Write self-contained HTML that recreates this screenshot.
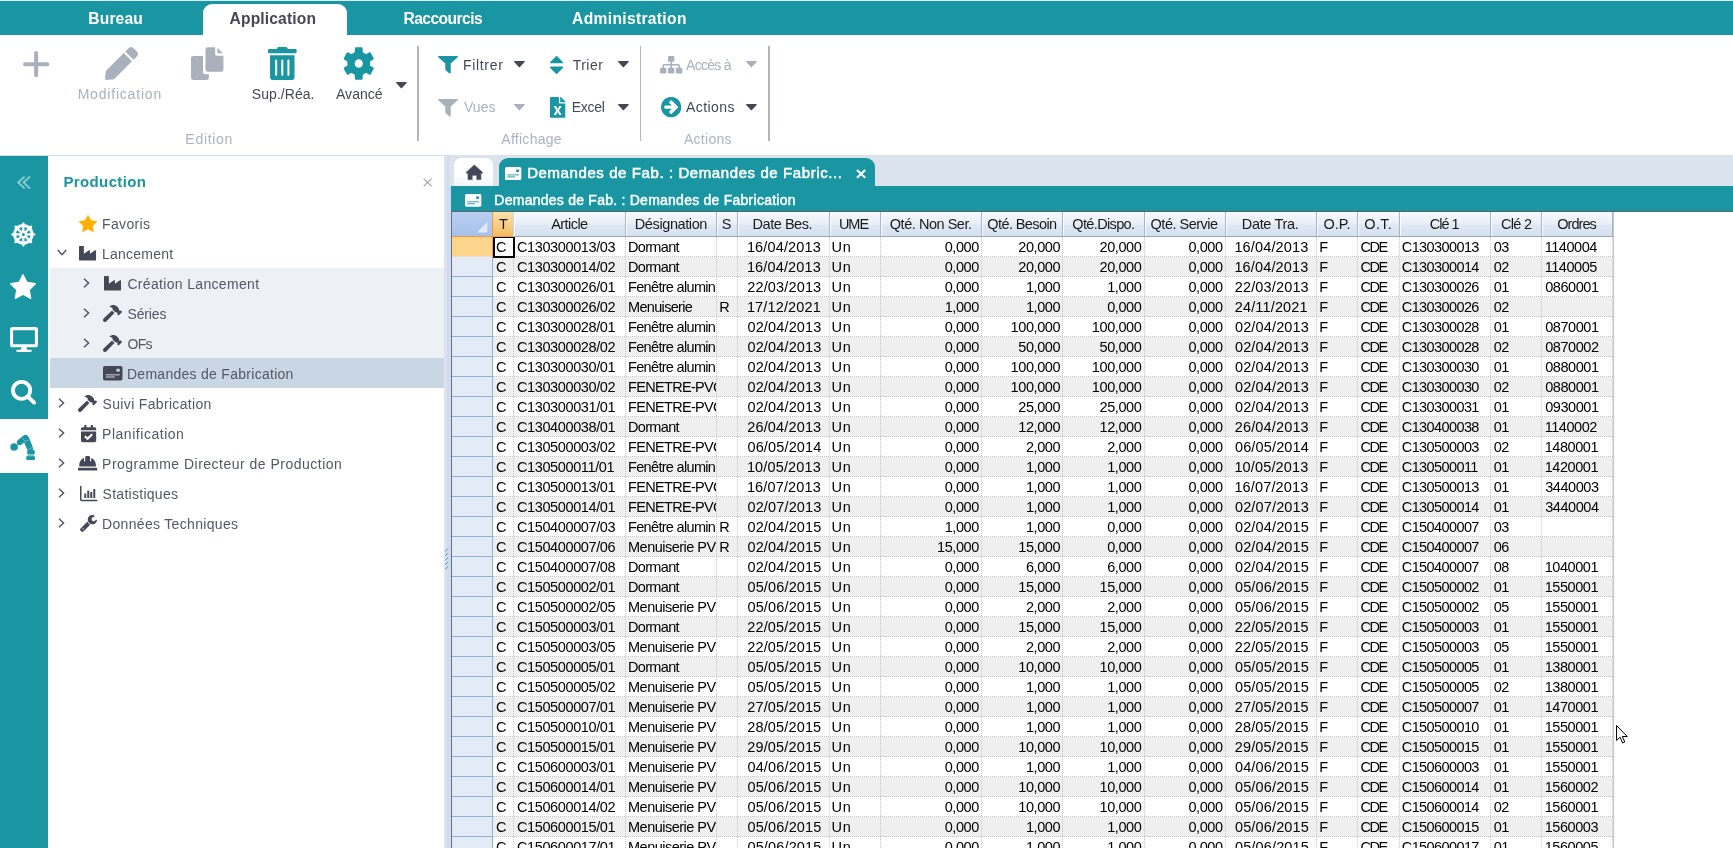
<!DOCTYPE html><html lang="fr"><head><meta charset="utf-8"><title>Demandes de Fabrication</title><style>
*{box-sizing:border-box}
html,body{margin:0;padding:0}
body{width:1733px;height:848px;overflow:hidden;background:#fff;position:relative;font-family:"Liberation Sans",sans-serif;}
#app{position:absolute;left:0;top:0;width:1733px;height:848px;overflow:hidden;will-change:transform;background:#fff}
.a,.t,.ic{position:absolute}
.t{white-space:nowrap;margin:0;padding:0;font-weight:normal}
.ic{display:block;overflow:visible}
#grid{position:absolute;left:451px;top:211px;width:1282px;height:637px;background:#fff;overflow:hidden;font-size:14.5px;color:#000}
.hc{position:absolute;top:1px;height:25px;border-right:1px solid #9fb6d6;border-bottom:1px solid #9ba5b4;background:linear-gradient(#f7f9fc 0%,#eaf0f8 45%,#dfe8f4 55%,#d5e1f0 100%);box-shadow:inset 1px 0 0 #fff;}
.row{position:absolute;left:42px;width:1120px;height:20px;border-bottom:1px dotted #c4c4c4}
.row.alt{background:#efefef}
.c{position:absolute;top:0;height:19px;line-height:21px;white-space:nowrap;overflow:hidden}
.vs{position:absolute;top:26px;width:0;height:611px;border-left:1px dotted #c6c6c6}
.rh{position:absolute;left:1px;width:41px;height:20px;background:#e3ebf7;border-bottom:1px solid #8fb0dd;border-right:1px solid #8fb0dd}
</style></head><body><div id="app">
<div class="a" id="topbar" style="left:0;top:0;width:1733px;height:35px;background:#1996a2;border-top:1px solid #d9eef0"></div>
<div class="a" id="tab-active" style="left:203px;top:4px;width:144px;height:32px;background:#fff;border-radius:9px 9px 0 0"></div>
<span class="t" style="left:88.36px;top:9.19px;font-size:15.6px;line-height:20px;color:#fff;letter-spacing:0.123px;font-weight:bold;">Bureau</span>
<span class="t" style="left:229.62px;top:9.19px;font-size:15.6px;line-height:20px;color:#48465a;letter-spacing:0.142px;font-weight:bold;">Application</span>
<span class="t" style="left:403.46px;top:9.19px;font-size:15.6px;line-height:20px;color:#fff;letter-spacing:-0.549px;font-weight:bold;">Raccourcis</span>
<span class="t" style="left:572.12px;top:9.19px;font-size:15.6px;line-height:20px;color:#fff;letter-spacing:0.329px;font-weight:bold;">Administration</span>
<div class="a" id="ribbon" style="left:0;top:35px;width:1733px;height:120px;background:#fff"></div>
<div class="a" style="left:0;top:155px;width:1733px;height:1px;background:#cfe0ea"></div>
<svg class="ic" style="left:23.40px;top:50.80px;width:26.30px;height:26.30px" viewBox="0 0 26 26" preserveAspectRatio="none"><path d="M13 2v22M2 13h22" stroke="#a9b1bd" stroke-width="4" stroke-linecap="round" fill="none"/></svg>
<svg class="ic" style="left:104.50px;top:47.00px;width:33.00px;height:33.00px" viewBox="0 0 512 512" preserveAspectRatio="none"><path fill="#a9b1bd" d="M290.74 93.24l128.02 128.02-277.99 277.99-114.14 12.6C11.35 513.54-1.56 500.62.14 485.34l12.7-114.22 277.9-277.88zm207.2-19.06l-60.11-60.11c-18.75-18.75-49.16-18.75-67.91 0l-56.55 56.55 128.02 128.02 56.55-56.55c18.75-18.76 18.75-49.16 0-67.91z"/></svg>
<span class="t" style="left:77.65px;top:84.85px;font-size:14px;line-height:18px;color:#a9b1bd;letter-spacing:0.804px;">Modification</span>
<svg class="ic" style="left:188.00px;top:44.00px;width:38.00px;height:38.00px" viewBox="188 44 38 38" preserveAspectRatio="none"><g fill="#a9b1bd"><path d="M193.200 55.900H203V72a2.200 2.200 0 0 0 2.200 2.200H208.900V77.700a2.200 2.200 0 0 1-2.200 2.200H193.200a2.200 2.200 0 0 1-2.200-2.200V58.100a2.200 2.200 0 0 1 2.200-2.200z"/><path d="M207.700 47.200H215.100V54a1.800 1.800 0 0 0 1.800 1.800H223.400V69.600a2.200 2.200 0 0 1-2.200 2.200H207.700a2.200 2.200 0 0 1-2.200-2.200V49.400a2.200 2.200 0 0 1 2.200-2.200z"/><path d="M217.400 48L222.900 53.300H217.400z"/></g></svg>
<svg class="ic" style="left:268.00px;top:46.70px;width:28.60px;height:33.00px" viewBox="0 0 448 512" preserveAspectRatio="none"><path fill="#1996a2" d="M32 464a48 48 0 0 0 48 48h288a48 48 0 0 0 48-48V128H32zm272-256a16 16 0 0 1 32 0v224a16 16 0 0 1-32 0zm-96 0a16 16 0 0 1 32 0v224a16 16 0 0 1-32 0zm-96 0a16 16 0 0 1 32 0v224a16 16 0 0 1-32 0zM432 32H312l-9.400-18.700A24 24 0 0 0 281.100 0H166.800a23.720 23.720 0 0 0-21.400 13.300L136 32H16A16 16 0 0 0 0 48v32a16 16 0 0 0 16 16h416a16 16 0 0 0 16-16V48a16 16 0 0 0-16-16z"/></svg>
<span class="t" style="left:251.87px;top:84.85px;font-size:14px;line-height:18px;color:#464756;letter-spacing:0.042px;">Sup./Réa.</span>
<svg class="ic" style="left:343.30px;top:46.70px;width:31.50px;height:33.00px" viewBox="0 0 100 100" preserveAspectRatio="none"><path fill="#1996a2" fill-rule="evenodd" stroke="#1996a2" stroke-width="6" stroke-linejoin="round" d="M40.0 17.5 L40.7 3.9 L59.3 3.9 L60.0 17.5 L73.1 25.1 L85.2 18.9 L94.6 35.1 L83.2 42.5 L83.2 57.5 L94.6 64.9 L85.2 81.1 L73.1 74.9 L60.0 82.5 L59.3 96.1 L40.7 96.1 L40.0 82.5 L26.9 74.9 L14.8 81.1 L5.4 64.9 L16.8 57.5 L16.8 42.5 L5.4 35.1 L14.8 18.9 L26.9 25.1Z M34 50 a16 16 0 1 0 32 0 a16 16 0 1 0 -32 0Z"/></svg>
<span class="t" style="left:335.98px;top:84.85px;font-size:14px;line-height:18px;color:#464756;letter-spacing:0.040px;">Avancé</span>
<svg class="ic" style="left:395.50px;top:82.40px;width:10.80px;height:6.40px" viewBox="0 0 10 6" preserveAspectRatio="none"><path fill="#464756" d="M0.6 0h8.8a0.6 0.6 0 0 1 .45 1L5.500 5.700a.7.7 0 0 1-1 0L.15 1A.6.6 0 0 1 .6 0z"/></svg>
<div class="a" style="left:417.25px;top:46px;width:1.5px;height:95px;background:#b3b5bc"></div>
<div class="a" style="left:639.65px;top:46px;width:1.5px;height:95px;background:#b3b5bc"></div>
<div class="a" style="left:768.25px;top:46px;width:1.5px;height:95px;background:#b3b5bc"></div>
<span class="t" style="left:185.35px;top:129.55px;font-size:14px;line-height:18px;color:#aab2c5;letter-spacing:0.708px;">Edition</span>
<span class="t" style="left:501.28px;top:129.55px;font-size:14px;line-height:18px;color:#aab2c5;letter-spacing:0.278px;">Affichage</span>
<span class="t" style="left:683.98px;top:129.55px;font-size:14px;line-height:18px;color:#aab2c5;letter-spacing:0.269px;">Actions</span>
<svg class="ic" style="left:438.30px;top:56.10px;width:20.00px;height:17.50px" viewBox="-1.0 -1280.0 1410.0 1408.0" preserveAspectRatio="none"><path transform="scale(1,-1)" fill="#1996a2" d="M1403 1241q17 -41 -14 -70l-493 -493v-742q0 -42 -39 -59q-13 -5 -25 -5q-27 0 -45 19l-256 256q-19 19 -19 45v486l-493 493q-31 29 -14 70q17 39 59 39h1280q42 0 59 -39z"/></svg>
<span class="t" style="left:462.95px;top:56.05px;font-size:14px;line-height:18px;color:#464756;letter-spacing:0.685px;">Filtrer</span>
<svg class="ic" style="left:514.30px;top:61.20px;width:10.80px;height:6.40px" viewBox="0 0 10 6" preserveAspectRatio="none"><path fill="#464756" d="M0.6 0h8.8a0.6 0.6 0 0 1 .45 1L5.500 5.700a.7.7 0 0 1-1 0L.15 1A.6.6 0 0 1 .6 0z"/></svg>
<svg class="ic" style="left:550.40px;top:55.70px;width:13.10px;height:17.90px" viewBox="0.0 -1344.0 1024.0 1408.0" preserveAspectRatio="none"><path transform="scale(1,-1)" fill="#1996a2" d="M1024 448q0 -26 -19 -45l-448 -448q-19 -19 -45 -19t-45 19l-448 448q-19 19 -19 45t19 45t45 19h896q26 0 45 -19t19 -45zM1024 832q0 -26 -19 -45t-45 -19h-896q-26 0 -45 19t-19 45t19 45l448 448q19 19 45 19t45 -19l448 -448q19 -19 19 -45z"/></svg>
<span class="t" style="left:572.69px;top:56.05px;font-size:14px;line-height:18px;color:#464756;letter-spacing:0.472px;">Trier</span>
<svg class="ic" style="left:618.00px;top:61.20px;width:10.80px;height:6.40px" viewBox="0 0 10 6" preserveAspectRatio="none"><path fill="#464756" d="M0.6 0h8.8a0.6 0.6 0 0 1 .45 1L5.500 5.700a.7.7 0 0 1-1 0L.15 1A.6.6 0 0 1 .6 0z"/></svg>
<svg class="ic" style="left:659.70px;top:56.10px;width:22.30px;height:17.50px" viewBox="0.0 -1408.0 1792.0 1536.0" preserveAspectRatio="none"><path transform="scale(1,-1)" fill="#a9b1bd" d="M1792 288v-320q0 -40 -28 -68t-68 -28h-320q-40 0 -68 28t-28 68v320q0 40 28 68t68 28h96v192h-512v-192h96q40 0 68 -28t28 -68v-320q0 -40 -28 -68t-68 -28h-320q-40 0 -68 28t-28 68v320q0 40 28 68t68 28h96v192h-512v-192h96q40 0 68 -28t28 -68v-320
q0 -40 -28 -68t-68 -28h-320q-40 0 -68 28t-28 68v320q0 40 28 68t68 28h96v192q0 52 38 90t90 38h512v192h-96q-40 0 -68 28t-28 68v320q0 40 28 68t68 28h320q40 0 68 -28t28 -68v-320q0 -40 -28 -68t-68 -28h-96v-192h512q52 0 90 -38t38 -90v-192h96q40 0 68 -28t28 -68
z"/></svg>
<span class="t" style="left:686.08px;top:56.05px;font-size:14px;line-height:18px;color:#a9b1bd;letter-spacing:-0.731px;">Accès à</span>
<svg class="ic" style="left:746.40px;top:61.20px;width:10.80px;height:6.40px" viewBox="0 0 10 6" preserveAspectRatio="none"><path fill="#a9b1bd" d="M0.6 0h8.8a0.6 0.6 0 0 1 .45 1L5.500 5.700a.7.7 0 0 1-1 0L.15 1A.6.6 0 0 1 .6 0z"/></svg>
<svg class="ic" style="left:438.30px;top:98.50px;width:20.00px;height:17.50px" viewBox="-1.0 -1280.0 1410.0 1408.0" preserveAspectRatio="none"><path transform="scale(1,-1)" fill="#a9b1bd" d="M1403 1241q17 -41 -14 -70l-493 -493v-742q0 -42 -39 -59q-13 -5 -25 -5q-27 0 -45 19l-256 256q-19 19 -19 45v486l-493 493q-31 29 -14 70q17 39 59 39h1280q42 0 59 -39z"/></svg>
<span class="t" style="left:463.94px;top:97.65px;font-size:14px;line-height:18px;color:#a9b1bd;letter-spacing:0.057px;">Vues</span>
<svg class="ic" style="left:514.30px;top:103.60px;width:10.80px;height:6.40px" viewBox="0 0 10 6" preserveAspectRatio="none"><path fill="#a9b1bd" d="M0.6 0h8.8a0.6 0.6 0 0 1 .45 1L5.500 5.700a.7.7 0 0 1-1 0L.15 1A.6.6 0 0 1 .6 0z"/></svg>
<svg class="ic" style="left:549.50px;top:96.90px;width:15.30px;height:20.70px" viewBox="0 0 384 512" preserveAspectRatio="none"><path fill="#1996a2" d="M224 136V0H24C10.7 0 0 10.7 0 24v464c0 13.300 10.700 24 24 24h336c13.300 0 24-10.700 24-24V160H248c-13.200 0-24-10.800-24-24zm60.100 106.500L224 336l60.100 93.500c5.100 8-.6 18.500-10.100 18.500h-34.900c-4.400 0-8.500-2.400-10.600-6.300C208.900 405.500 192 373 192 373c-6.400 14.800-10 20-36.600 68.800-2.100 3.900-6.100 6.300-10.500 6.300H110c-9.500 0-15.200-10.500-10.100-18.500l60.300-93.500-60.300-93.500c-5.200-8 .6-18.500 10.100-18.500h34.800c4.400 0 8.500 2.400 10.600 6.300 26.100 48.800 20 33.600 36.600 68.500 0 0 6.100-11.700 36.600-68.500 2.100-3.900 6.200-6.300 10.600-6.300H274c9.500-.1 15.200 10.400 10.100 18.400zM384 121.900v6.100H256V0h6.100c6.400 0 12.500 2.500 17 7l97.900 98c4.500 4.500 7 10.600 7 16.900z"/></svg>
<span class="t" style="left:571.85px;top:97.65px;font-size:14px;line-height:18px;color:#464756;letter-spacing:-0.313px;">Excel</span>
<svg class="ic" style="left:618.00px;top:103.60px;width:10.80px;height:6.40px" viewBox="0 0 10 6" preserveAspectRatio="none"><path fill="#464756" d="M0.6 0h8.8a0.6 0.6 0 0 1 .45 1L5.500 5.700a.7.7 0 0 1-1 0L.15 1A.6.6 0 0 1 .6 0z"/></svg>
<svg class="ic" style="left:660.80px;top:96.90px;width:20.30px;height:20.30px" viewBox="0.0 -1408.0 1536.0 1536.0" preserveAspectRatio="none"><path transform="scale(1,-1)" fill="#1996a2" d="M1285 640q0 27 -18 45l-91 91l-362 362q-18 18 -45 18t-45 -18l-91 -91q-18 -18 -18 -45t18 -45l189 -189h-502q-26 0 -45 -19t-19 -45v-128q0 -26 19 -45t45 -19h502l-189 -189q-19 -19 -19 -45t19 -45l91 -91q18 -18 45 -18t45 18l362 362l91 91q18 18 18 45zM1536 640
q0 -209 -103 -385.5t-279.5 -279.5t-385.5 -103t-385.5 103t-279.5 279.5t-103 385.5t103 385.5t279.5 279.5t385.5 103t385.5 -103t279.5 -279.5t103 -385.5z"/></svg>
<span class="t" style="left:686.08px;top:97.65px;font-size:14px;line-height:18px;color:#464756;letter-spacing:0.419px;">Actions</span>
<svg class="ic" style="left:746.40px;top:103.60px;width:10.80px;height:6.40px" viewBox="0 0 10 6" preserveAspectRatio="none"><path fill="#464756" d="M0.6 0h8.8a0.6 0.6 0 0 1 .45 1L5.500 5.700a.7.7 0 0 1-1 0L.15 1A.6.6 0 0 1 .6 0z"/></svg>
<div class="a" id="sidebar" style="left:0;top:156px;width:48px;height:692px;background:#1996a2"></div>
<div class="a" style="left:0;top:419px;width:48px;height:54px;background:#fff"></div>
<svg class="ic" style="left:17.00px;top:176.00px;width:13.50px;height:13.00px" viewBox="45.0 -1075.0 966.0 998.0" preserveAspectRatio="none"><path transform="scale(1,-1)" fill="#8ccdd3" d="M627 160q0 -13 -10 -23l-50 -50q-10 -10 -23 -10t-23 10l-466 466q-10 10 -10 23t10 23l466 466q10 10 23 10t23 -10l50 -50q10 -10 10 -23t-10 -23l-393 -393l393 -393q10 -10 10 -23zM1011 160q0 -13 -10 -23l-50 -50q-10 -10 -23 -10t-23 10l-466 466q-10 10 -10 23
t10 23l466 466q10 10 23 10t23 -10l50 -50q10 -10 10 -23t-10 -23l-393 -393l393 -393q10 -10 10 -23z"/></svg>
<svg class="ic" style="left:0.00px;top:210.00px;width:48.00px;height:52.00px" viewBox="0 210 48 52" preserveAspectRatio="none"><circle cx="23.3" cy="234.4" r="8.800" fill="none" stroke="#fff" stroke-width="3"/><circle cx="23.3" cy="234.4" r="3.700" fill="#fff"/><g transform="rotate(0 23.3 234.4)"><rect x="22.150000000000002" y="226.4" width="2.300" height="8" fill="#fff"/><path d="M21.8 224.4 L23.3 222.4 L24.8 224.4z" fill="#fff" stroke="#fff" stroke-width="0.700" stroke-linejoin="round"/></g><g transform="rotate(45 23.3 234.4)"><rect x="22.150000000000002" y="226.4" width="2.300" height="8" fill="#fff"/><path d="M21.8 224.4 L23.3 222.4 L24.8 224.4z" fill="#fff" stroke="#fff" stroke-width="0.700" stroke-linejoin="round"/></g><g transform="rotate(90 23.3 234.4)"><rect x="22.150000000000002" y="226.4" width="2.300" height="8" fill="#fff"/><path d="M21.8 224.4 L23.3 222.4 L24.8 224.4z" fill="#fff" stroke="#fff" stroke-width="0.700" stroke-linejoin="round"/></g><g transform="rotate(135 23.3 234.4)"><rect x="22.150000000000002" y="226.4" width="2.300" height="8" fill="#fff"/><path d="M21.8 224.4 L23.3 222.4 L24.8 224.4z" fill="#fff" stroke="#fff" stroke-width="0.700" stroke-linejoin="round"/></g><g transform="rotate(180 23.3 234.4)"><rect x="22.150000000000002" y="226.4" width="2.300" height="8" fill="#fff"/><path d="M21.8 224.4 L23.3 222.4 L24.8 224.4z" fill="#fff" stroke="#fff" stroke-width="0.700" stroke-linejoin="round"/></g><g transform="rotate(225 23.3 234.4)"><rect x="22.150000000000002" y="226.4" width="2.300" height="8" fill="#fff"/><path d="M21.8 224.4 L23.3 222.4 L24.8 224.4z" fill="#fff" stroke="#fff" stroke-width="0.700" stroke-linejoin="round"/></g><g transform="rotate(270 23.3 234.4)"><rect x="22.150000000000002" y="226.4" width="2.300" height="8" fill="#fff"/><path d="M21.8 224.4 L23.3 222.4 L24.8 224.4z" fill="#fff" stroke="#fff" stroke-width="0.700" stroke-linejoin="round"/></g><g transform="rotate(315 23.3 234.4)"><rect x="22.150000000000002" y="226.4" width="2.300" height="8" fill="#fff"/><path d="M21.8 224.4 L23.3 222.4 L24.8 224.4z" fill="#fff" stroke="#fff" stroke-width="0.700" stroke-linejoin="round"/></g><circle cx="23.3" cy="234.4" r="1.500" fill="#1996a2"/></svg>
<svg class="ic" style="left:10.20px;top:274.00px;width:26.00px;height:25.00px" viewBox="0.0 -1504.0 1664.0 1587.0" preserveAspectRatio="none"><path transform="scale(1,-1)" fill="#fff" d="M1664 889q0 -22 -26 -48l-363 -354l86 -500q1 -7 1 -20q0 -21 -10.5 -35.5t-30.5 -14.5q-19 0 -40 12l-449 236l-449 -236q-22 -12 -40 -12q-21 0 -31.5 14.5t-10.5 35.5q0 6 2 20l86 500l-364 354q-25 27 -25 48q0 37 56 46l502 73l225 455q19 41 49 41t49 -41l225 -455
l502 -73q56 -9 56 -46z"/></svg>
<svg class="ic" style="left:9.60px;top:327.00px;width:28.00px;height:25.00px" viewBox="0 0 576 512" preserveAspectRatio="none"><path fill="#fff" d="M528 0H48C21.500 0 0 21.500 0 48v320c0 26.500 21.500 48 48 48h192l-16 48h-72c-13.300 0-24 10.700-24 24s10.700 24 24 24h272c13.300 0 24-10.700 24-24s-10.700-24-24-24h-72l-16-48h192c26.500 0 48-21.500 48-48V48c0-26.500-21.500-48-48-48zm-16 352H64V64h448v288z"/></svg>
<svg class="ic" style="left:11.00px;top:380.00px;width:25.00px;height:24.50px" viewBox="0.0 -1408.0 1664.0 1664.0" preserveAspectRatio="none"><path transform="scale(1,-1)" fill="#fff" d="M1152 704q0 185 -131.5 316.5t-316.5 131.5t-316.5 -131.5t-131.5 -316.5t131.5 -316.5t316.5 -131.5t316.5 131.5t131.5 316.5zM1664 -128q0 -52 -38 -90t-90 -38q-54 0 -90 38l-343 342q-179 -124 -399 -124q-143 0 -273.5 55.5t-225 150t-150 225t-55.5 273.5
t55.5 273.5t150 225t225 150t273.5 55.5t273.5 -55.5t225 -150t150 -225t55.5 -273.5q0 -220 -124 -399l343 -343q37 -37 37 -90z"/></svg>
<svg class="ic" style="left:0.00px;top:420.00px;width:48.00px;height:52.00px" viewBox="0 420 48 52" preserveAspectRatio="none"><circle cx="14.100" cy="447" r="3.800" fill="#1996a2"/><path d="M17 445l2.500-2" stroke="#7cc6cd" stroke-width="2.500" fill="none"/><path d="M19.800 442.300L25.400 437.900" stroke="#1996a2" stroke-width="5.800" stroke-linecap="round" fill="none"/><path d="M26.300 439.200L29.800 448.200" stroke="#1996a2" stroke-width="6.200" stroke-linecap="round" fill="none"/><ellipse cx="31" cy="452.200" rx="3.900" ry="3" fill="#1996a2"/><rect x="27.500" y="454" width="6.500" height="3" fill="#7cc6cd"/><rect x="26.200" y="456.200" width="8.800" height="3.700" rx="0.800" fill="#1996a2"/><path d="M22 438l3.500 3.500M25 441.500l4-1.500M27.500 449.500l5-2" stroke="#7cc6cd" stroke-width="0.700" fill="none"/></svg>
<div class="a" id="nav" style="left:48px;top:156px;width:396px;height:692px;background:#fff"></div>
<div class="a" style="left:50px;top:268px;width:394px;height:90px;background:#edf0f5"></div>
<div class="a" style="left:50px;top:358px;width:394px;height:30px;background:#c9d6e3"></div>
<span class="t" style="left:63.50px;top:172.30px;font-size:15px;line-height:20px;color:#1996a2;letter-spacing:0.363px;font-weight:bold;">Production</span>
<svg class="ic" style="left:422.60px;top:178.10px;width:9.20px;height:9.00px" viewBox="0 0 10 10" preserveAspectRatio="none"><path d="M0.700 0.700l8.600 8.600M9.300 0.700l-8.600 8.600" stroke="#a3a9b5" stroke-width="1.500" fill="none"/></svg>
<svg class="ic" style="left:79.00px;top:215.00px;width:18.00px;height:17.00px" viewBox="0.0 -1504.0 1664.0 1587.0" preserveAspectRatio="none"><path transform="scale(1,-1)" fill="#ffb000" d="M1664 889q0 -22 -26 -48l-363 -354l86 -500q1 -7 1 -20q0 -21 -10.5 -35.5t-30.5 -14.5q-19 0 -40 12l-449 236l-449 -236q-22 -12 -40 -12q-21 0 -31.5 14.5t-10.5 35.5q0 6 2 20l86 500l-364 354q-25 27 -25 48q0 37 56 46l502 73l225 455q19 41 49 41t49 -41l225 -455
l502 -73q56 -9 56 -46z"/></svg>
<span class="t" style="left:102.05px;top:215.15px;font-size:14px;line-height:18px;color:#545765;letter-spacing:0.342px;">Favoris</span>
<svg class="ic" style="left:57.00px;top:248.60px;width:10.00px;height:7.00px" viewBox="0 0 10 7" preserveAspectRatio="none"><path d="M0.800 1L5 5.600 9.200 1" stroke="#4f4f68" stroke-width="1.400" fill="none"/></svg>
<svg class="ic" style="left:79.00px;top:246.00px;width:17.00px;height:14.50px" viewBox="0.0 -1536.0 1792.0 1792.0" preserveAspectRatio="none"><path transform="scale(1,-1)" fill="#464756" d="M448 1536q26 0 45 -19t19 -45v-891l536 429q17 14 40 14q26 0 45 -19t19 -45v-379l536 429q17 14 40 14q26 0 45 -19t19 -45v-1152q0 -26 -19 -45t-45 -19h-1664q-26 0 -45 19t-19 45v1664q0 26 19 45t45 19h384z"/></svg>
<span class="t" style="left:102.05px;top:245.15px;font-size:14px;line-height:18px;color:#545765;letter-spacing:0.222px;">Lancement</span>
<svg class="ic" style="left:83.00px;top:278.00px;width:7.00px;height:10.00px" viewBox="0 0 7 10" preserveAspectRatio="none"><path d="M1 0.800L5.600 5 1 9.200" stroke="#4f4f68" stroke-width="1.400" fill="none"/></svg>
<svg class="ic" style="left:104.00px;top:276.00px;width:17.00px;height:14.50px" viewBox="0.0 -1536.0 1792.0 1792.0" preserveAspectRatio="none"><path transform="scale(1,-1)" fill="#464756" d="M448 1536q26 0 45 -19t19 -45v-891l536 429q17 14 40 14q26 0 45 -19t19 -45v-379l536 429q17 14 40 14q26 0 45 -19t19 -45v-1152q0 -26 -19 -45t-45 -19h-1664q-26 0 -45 19t-19 45v1664q0 26 19 45t45 19h384z"/></svg>
<span class="t" style="left:127.39px;top:275.15px;font-size:14px;line-height:18px;color:#545765;letter-spacing:0.331px;">Création Lancement</span>
<svg class="ic" style="left:83.00px;top:308.00px;width:7.00px;height:10.00px" viewBox="0 0 7 10" preserveAspectRatio="none"><path d="M1 0.800L5.600 5 1 9.200" stroke="#4f4f68" stroke-width="1.400" fill="none"/></svg>
<svg class="ic" style="left:103.00px;top:305.00px;width:19.00px;height:17.00px" viewBox="0 0 576 512" preserveAspectRatio="none"><path fill="#464756" d="M571.310 193.940l-22.630-22.630c-6.250-6.250-16.380-6.250-22.630 0l-11.310 11.310-28.900-28.900c5.630-21.310.36-44.900-16.350-61.610l-45.250-45.250c-62.480-62.480-163.790-62.480-226.280 0l90.510 45.250v18.750c0 16.970 6.740 33.250 18.750 45.250l49.140 49.140c16.710 16.710 40.300 21.980 61.610 16.350l28.900 28.900-11.310 11.310c-6.250 6.250-6.250 16.380 0 22.630l22.630 22.630c6.250 6.250 16.380 6.250 22.630 0l90.510-90.510c6.230-6.240 6.230-16.370-.020-22.620zm-286.720-15.200c-3.700-3.700-6.840-7.790-9.850-11.950L19.640 404.960c-25.570 23.880-26.260 64.190-1.530 88.930s65.050 24.050 88.930-1.530l238.130-255.070c-3.960-2.910-7.900-5.870-11.440-9.410l-49.140-49.140z"/></svg>
<span class="t" style="left:127.47px;top:305.15px;font-size:14px;line-height:18px;color:#545765;letter-spacing:-0.130px;">Séries</span>
<svg class="ic" style="left:83.00px;top:338.00px;width:7.00px;height:10.00px" viewBox="0 0 7 10" preserveAspectRatio="none"><path d="M1 0.800L5.600 5 1 9.200" stroke="#4f4f68" stroke-width="1.400" fill="none"/></svg>
<svg class="ic" style="left:103.00px;top:335.00px;width:19.00px;height:17.00px" viewBox="0 0 576 512" preserveAspectRatio="none"><path fill="#464756" d="M571.310 193.940l-22.630-22.630c-6.250-6.250-16.380-6.250-22.630 0l-11.310 11.310-28.900-28.900c5.630-21.310.36-44.900-16.350-61.610l-45.250-45.250c-62.480-62.480-163.790-62.480-226.280 0l90.510 45.250v18.750c0 16.970 6.740 33.250 18.750 45.250l49.140 49.140c16.710 16.710 40.300 21.980 61.610 16.350l28.900 28.900-11.310 11.310c-6.250 6.250-6.250 16.380 0 22.630l22.630 22.630c6.250 6.250 16.380 6.250 22.630 0l90.510-90.510c6.230-6.240 6.230-16.370-.020-22.620zm-286.720-15.200c-3.700-3.700-6.840-7.790-9.850-11.950L19.640 404.960c-25.570 23.880-26.260 64.190-1.530 88.930s65.050 24.050 88.930-1.530l238.130-255.070c-3.960-2.910-7.900-5.870-11.440-9.410l-49.140-49.140z"/></svg>
<span class="t" style="left:127.44px;top:335.15px;font-size:14px;line-height:18px;color:#545765;letter-spacing:-0.688px;">OFs</span>
<svg class="ic" style="left:103.00px;top:366.00px;width:19.50px;height:14.50px" viewBox="0 0 64 52" preserveAspectRatio="none"><rect x="0" y="0" width="64" height="52" rx="6" fill="#464756"/><rect x="44" y="10" width="11" height="10" fill="#c9d6e3"/><rect x="9" y="30" width="46" height="3.500" fill="#c9d6e3"/><rect x="9" y="37" width="30" height="5" fill="#c9d6e3" opacity=".75"/></svg>
<span class="t" style="left:126.95px;top:365.15px;font-size:14px;line-height:18px;color:#545765;letter-spacing:0.279px;">Demandes de Fabrication</span>
<svg class="ic" style="left:58.00px;top:398.00px;width:7.00px;height:10.00px" viewBox="0 0 7 10" preserveAspectRatio="none"><path d="M1 0.800L5.600 5 1 9.200" stroke="#4f4f68" stroke-width="1.400" fill="none"/></svg>
<svg class="ic" style="left:78.00px;top:395.00px;width:19.00px;height:17.00px" viewBox="0 0 576 512" preserveAspectRatio="none"><path fill="#464756" d="M571.310 193.940l-22.630-22.630c-6.250-6.250-16.380-6.250-22.630 0l-11.310 11.310-28.900-28.900c5.630-21.310.36-44.900-16.350-61.610l-45.250-45.250c-62.480-62.480-163.790-62.480-226.280 0l90.510 45.250v18.750c0 16.970 6.740 33.250 18.750 45.250l49.140 49.140c16.710 16.710 40.300 21.980 61.610 16.350l28.900 28.900-11.310 11.310c-6.250 6.250-6.250 16.380 0 22.630l22.630 22.630c6.250 6.250 16.380 6.250 22.630 0l90.510-90.510c6.230-6.240 6.230-16.370-.020-22.620zm-286.720-15.200c-3.700-3.700-6.840-7.790-9.850-11.950L19.640 404.960c-25.570 23.880-26.260 64.190-1.530 88.930s65.050 24.050 88.930-1.530l238.130-255.070c-3.960-2.910-7.900-5.870-11.440-9.410l-49.140-49.140z"/></svg>
<span class="t" style="left:102.57px;top:395.15px;font-size:14px;line-height:18px;color:#545765;letter-spacing:0.334px;">Suivi Fabrication</span>
<svg class="ic" style="left:58.00px;top:428.00px;width:7.00px;height:10.00px" viewBox="0 0 7 10" preserveAspectRatio="none"><path d="M1 0.800L5.600 5 1 9.200" stroke="#4f4f68" stroke-width="1.400" fill="none"/></svg>
<svg class="ic" style="left:80.90px;top:424.80px;width:15.20px;height:17.20px" viewBox="0 0 448 512" preserveAspectRatio="none"><path fill="#464756" d="M436 160H12c-6.627 0-12-5.373-12-12v-36c0-26.510 21.490-48 48-48h48V12c0-6.627 5.373-12 12-12h40c6.627 0 12 5.373 12 12v52h128V12c0-6.627 5.373-12 12-12h40c6.627 0 12 5.373 12 12v52h48c26.510 0 48 21.490 48 48v36c0 6.627-5.373 12-12 12zM12 192h424c6.627 0 12 5.373 12 12v260c0 26.510-21.490 48-48 48H48c-26.510 0-48-21.490-48-48V204c0-6.627 5.373-12 12-12zm333.296 95.947l-28.169-28.398c-4.667-4.705-12.265-4.736-16.970-.068L194.120 364.665l-45.980-46.352c-4.667-4.705-12.266-4.736-16.971-.068l-28.397 28.170c-4.705 4.667-4.736 12.265-.068 16.970l82.601 83.269c4.667 4.705 12.265 4.736 16.970.068l142.953-141.805c4.705-4.667 4.736-12.265.068-16.970z"/></svg>
<span class="t" style="left:102.05px;top:425.15px;font-size:14px;line-height:18px;color:#545765;letter-spacing:0.530px;">Planification</span>
<svg class="ic" style="left:58.00px;top:458.00px;width:7.00px;height:10.00px" viewBox="0 0 7 10" preserveAspectRatio="none"><path d="M1 0.800L5.600 5 1 9.200" stroke="#4f4f68" stroke-width="1.400" fill="none"/></svg>
<svg class="ic" style="left:78.00px;top:456.00px;width:19.20px;height:14.60px" viewBox="0 32 512 336" preserveAspectRatio="none"><path fill="#464756" d="M480 240v-16c0-83.600-53.500-154.500-128-180.900V112c0 8.800-7.200 16-16 16s-16-7.200-16-16V32c0-17.700-14.300-32-32-32h-64c-17.700 0-32 14.300-32 32v80c0 8.800-7.200 16-16 16s-16-7.200-16-16V43.100C85.500 69.500 32 140.400 32 224v16zM496 272H16c-8.800 0-16 7.200-16 16v32c0 8.800 7.200 16 16 16h480c8.800 0 16-7.200 16-16v-32c0-8.800-7.200-16-16-16z" transform="translate(0,32)"/></svg>
<span class="t" style="left:102.05px;top:455.15px;font-size:14px;line-height:18px;color:#545765;letter-spacing:0.492px;">Programme Directeur de Production</span>
<svg class="ic" style="left:58.00px;top:488.00px;width:7.00px;height:10.00px" viewBox="0 0 7 10" preserveAspectRatio="none"><path d="M1 0.800L5.600 5 1 9.200" stroke="#4f4f68" stroke-width="1.400" fill="none"/></svg>
<svg class="ic" style="left:79.50px;top:485.50px;width:17.50px;height:15.50px" viewBox="0 0 70 62" preserveAspectRatio="none"><path d="M3 2v52a4 4 0 0 0 4 4h60" stroke="#464756" stroke-width="6" fill="none" stroke-linecap="round"/><g fill="#464756"><rect x="17" y="30" width="8" height="18" rx="2"/><rect x="29" y="18" width="8" height="30" rx="2"/><rect x="41" y="24" width="8" height="24" rx="2"/><rect x="53" y="12" width="8" height="36" rx="2"/></g></svg>
<span class="t" style="left:102.57px;top:485.15px;font-size:14px;line-height:18px;color:#545765;letter-spacing:0.278px;">Statistiques</span>
<svg class="ic" style="left:58.00px;top:518.00px;width:7.00px;height:10.00px" viewBox="0 0 7 10" preserveAspectRatio="none"><path d="M1 0.800L5.600 5 1 9.200" stroke="#4f4f68" stroke-width="1.400" fill="none"/></svg>
<svg class="ic" style="left:79.50px;top:515.00px;width:17.00px;height:17.00px" viewBox="21.0 -1408.0 1641.0 1643.0" preserveAspectRatio="none"><path transform="scale(1,-1)" fill="#464756" d="M384 64q0 26 -19 45t-45 19t-45 -19t-19 -45t19 -45t45 -19t45 19t19 45zM1028 484l-682 -682q-37 -37 -90 -37q-52 0 -91 37l-106 108q-38 36 -38 90q0 53 38 91l681 681q39 -98 114.5 -173.5t173.5 -114.5zM1662 919q0 -39 -23 -106q-47 -134 -164.5 -217.5
t-258.5 -83.5q-185 0 -316.5 131.5t-131.5 316.5t131.5 316.5t316.5 131.5q58 0 121.5 -16.5t107.5 -46.5q16 -11 16 -28t-16 -28l-293 -169v-224l193 -107q5 3 79 48.5t135.5 81t70.5 35.5q15 0 23.5 -10t8.5 -25z"/></svg>
<span class="t" style="left:102.05px;top:515.15px;font-size:14px;line-height:18px;color:#545765;letter-spacing:0.320px;">Données Techniques</span>
<div class="a" style="left:444px;top:156px;width:3px;height:692px;background:#dce3ec"></div>
<div class="a" style="left:447px;top:156px;width:4px;height:692px;background:#cddcf1"></div>
<svg class="ic" style="left:444.50px;top:548.00px;width:3.00px;height:22.00px" viewBox="0 0 3 22" preserveAspectRatio="none"><path d="M0.300 3.500l2.400-3M0.300 8l2.400-3M0.300 12.500l2.400-3M0.300 17l2.400-3M0.300 21.500l2.400-3" stroke="#3d7fe0" stroke-width="0.900" fill="none"/></svg>
<div class="a" id="tabstrip" style="left:449px;top:155px;width:1284px;height:31px;background:#dae3ec"></div>
<div class="a" style="left:454px;top:157.7px;width:38.7px;height:28.3px;background:linear-gradient(#fff 55%,#f1f4f9);border-radius:7px 7px 0 0"></div>
<svg class="ic" style="left:460.00px;top:160.00px;width:30.00px;height:24.00px" viewBox="460 160 30 24" preserveAspectRatio="none"><path fill="#464756" stroke="#464756" stroke-width="0.600" stroke-linejoin="round" d="M474.300 165L482.800 172.500 481.900 173.600 480.900 172.800V179.600H476.800V175.300H472.200V179.600H468V172.800L467 173.600 466 172.500z"/></svg>
<div class="a" style="left:499px;top:157.5px;width:376.4px;height:29px;background:#1996a2;border-radius:9px 9px 0 0"></div>
<svg class="ic" style="left:505.00px;top:167.10px;width:16.30px;height:13.00px" viewBox="0 0 64 52" preserveAspectRatio="none"><rect x="0" y="0" width="64" height="52" rx="6" fill="#fff"/><rect x="44" y="10" width="11" height="10" fill="#1996a2"/><rect x="9" y="30" width="46" height="3.500" fill="#1996a2"/><rect x="9" y="37" width="30" height="5" fill="#1996a2" opacity=".75"/></svg>
<span class="t" style="left:527.17px;top:163.20px;font-size:15px;line-height:20px;color:#fff;letter-spacing:0.589px;-webkit-text-stroke:0.5px #fff;">Demandes de Fab. : Demandes de Fabric...</span>
<svg class="ic" style="left:856.00px;top:169.00px;width:10.20px;height:9.70px" viewBox="0 0 10 10" preserveAspectRatio="none"><path d="M1 1l8 8M9 1l-8 8" stroke="#fff" stroke-width="2" fill="none"/></svg>
<div class="a" id="titlebar" style="left:451px;top:186px;width:1282px;height:25px;background:#1996a2"></div>
<svg class="ic" style="left:465.00px;top:193.50px;width:16.30px;height:12.80px" viewBox="0 0 64 52" preserveAspectRatio="none"><rect x="0" y="0" width="64" height="52" rx="6" fill="#fff"/><rect x="44" y="10" width="11" height="10" fill="#1996a2"/><rect x="9" y="30" width="46" height="3.500" fill="#1996a2"/><rect x="9" y="37" width="30" height="5" fill="#1996a2" opacity=".75"/></svg>
<span class="t" style="left:494.35px;top:191.15px;font-size:14px;line-height:18px;color:#fff;letter-spacing:0.246px;-webkit-text-stroke:0.45px #fff;">Demandes de Fab. : Demandes de Fabrication</span>
<div id="grid">
<div class="a" style="left:0;top:0;width:1282px;height:1px;background:#5f6368"></div>
<div class="a" style="left:0;top:0;width:1px;height:637px;background:#6f7378"></div>
<div class="hc" style="left:1px;width:41px;background:linear-gradient(#b9cff0,#a6c1ea);border-right:1px solid #f29b3c;border-bottom:1px solid #f59a3c;box-shadow:none"></div>
<svg class="ic" style="left:26.00px;top:10.80px;width:10.30px;height:10.40px" viewBox="0 0 10 10" preserveAspectRatio="none"><path d="M10 0v10H0z" fill="#e3ebf8"/></svg>
<div class="hc" style="left:42px;width:21px;background:linear-gradient(#fae0b0,#f8cf88 50%,#f4bb5e);border-right:1px solid #cfd6e2;border-bottom:1px solid #f59a3c;box-shadow:none;"></div>
<span class="t" style="left:48.08px;top:4.28px;font-size:14.5px;line-height:19px;color:#1a1a1a;">T</span>
<div class="hc" style="left:63px;width:112px;"></div>
<span class="t" style="left:100.23px;top:4.28px;font-size:14.5px;line-height:19px;color:#1a1a1a;letter-spacing:-0.562px;">Article</span>
<div class="hc" style="left:175px;width:91px;"></div>
<span class="t" style="left:183.81px;top:4.28px;font-size:14.5px;line-height:19px;color:#1a1a1a;letter-spacing:-0.395px;">Désignation</span>
<div class="hc" style="left:266px;width:21px;"></div>
<span class="t" style="left:270.85px;top:4.28px;font-size:14.5px;line-height:19px;color:#1a1a1a;">S</span>
<div class="hc" style="left:287px;width:92px;"></div>
<span class="t" style="left:301.56px;top:4.28px;font-size:14.5px;line-height:19px;color:#1a1a1a;letter-spacing:-0.459px;">Date Bes.</span>
<div class="hc" style="left:379px;width:51px;"></div>
<span class="t" style="left:387.88px;top:4.28px;font-size:14.5px;line-height:19px;color:#1a1a1a;letter-spacing:-0.993px;">UME</span>
<div class="hc" style="left:430px;width:101px;"></div>
<span class="t" style="left:438.82px;top:4.28px;font-size:14.5px;line-height:19px;color:#1a1a1a;letter-spacing:-0.467px;">Qté. Non Ser.</span>
<div class="hc" style="left:531px;width:81px;"></div>
<span class="t" style="left:536.32px;top:4.28px;font-size:14.5px;line-height:19px;color:#1a1a1a;letter-spacing:-0.590px;">Qté. Besoin</span>
<div class="hc" style="left:612px;width:82px;"></div>
<span class="t" style="left:621.32px;top:4.28px;font-size:14.5px;line-height:19px;color:#1a1a1a;letter-spacing:-0.639px;">Qté.Dispo.</span>
<div class="hc" style="left:694px;width:81px;"></div>
<span class="t" style="left:699.57px;top:4.28px;font-size:14.5px;line-height:19px;color:#1a1a1a;letter-spacing:-0.496px;">Qté. Servie</span>
<div class="hc" style="left:775px;width:91px;"></div>
<span class="t" style="left:790.81px;top:4.28px;font-size:14.5px;line-height:19px;color:#1a1a1a;letter-spacing:-0.329px;">Date Tra.</span>
<div class="hc" style="left:866px;width:41px;"></div>
<span class="t" style="left:872.57px;top:4.28px;font-size:14.5px;line-height:19px;color:#1a1a1a;letter-spacing:-0.048px;">O.P.</span>
<div class="hc" style="left:907px;width:42px;"></div>
<span class="t" style="left:913.32px;top:4.28px;font-size:14.5px;line-height:19px;color:#1a1a1a;letter-spacing:0.305px;">O.T.</span>
<div class="hc" style="left:949px;width:91px;"></div>
<span class="t" style="left:978.77px;top:4.28px;font-size:14.5px;line-height:19px;color:#1a1a1a;letter-spacing:-1.041px;">Clé 1</span>
<div class="hc" style="left:1040px;width:51px;"></div>
<span class="t" style="left:1050.02px;top:4.28px;font-size:14.5px;line-height:19px;color:#1a1a1a;letter-spacing:-0.723px;">Clé 2</span>
<div class="hc" style="left:1091px;width:71px;"></div>
<span class="t" style="left:1106.32px;top:4.28px;font-size:14.5px;line-height:19px;color:#1a1a1a;letter-spacing:-0.972px;">Ordres</span>
<div class="a" style="left:1162px;top:1px;width:1px;height:636px;background:#c2c6cc"></div>
<div class="rh" style="top:26px;background:#fdd48b;border-bottom-color:#e6dccb;border-right-color:#f29b3c;"></div>
<div class="row" style="top:26px"><div class="c" style="left:0px;width:20px;padding-left:3.07px;">C</div><div class="c" style="left:21px;width:111px;letter-spacing:-0.38px;padding-left:2.97px;">C130300013/03</div><div class="c" style="left:133px;width:90px;letter-spacing:-0.68px;padding-left:2.06px;">Dormant</div><div class="c" style="left:224px;width:20px;"></div><div class="c" style="left:245px;width:91px;letter-spacing:0.15px;padding-left:8.90px;">16/04/2013</div><div class="c" style="left:337px;width:50px;letter-spacing:0.9px;padding-left:1.38px;">Un</div><div class="c" style="left:388px;width:100px;letter-spacing:-0.41px;text-align:right;padding-right:2.10px;">0,000</div><div class="c" style="left:489px;width:80px;letter-spacing:-0.41px;text-align:right;padding-right:1.85px;">20,000</div><div class="c" style="left:570px;width:81px;letter-spacing:-0.41px;text-align:right;padding-right:2.60px;">20,000</div><div class="c" style="left:652px;width:80px;letter-spacing:-0.41px;text-align:right;padding-right:2.35px;">0,000</div><div class="c" style="left:733px;width:90px;letter-spacing:0.15px;padding-left:8.40px;">16/04/2013</div><div class="c" style="left:824px;width:40px;padding-left:2.31px;">F</div><div class="c" style="left:865px;width:41px;letter-spacing:-1.5px;padding-left:2.52px;">CDE</div><div class="c" style="left:907px;width:90px;letter-spacing:-0.6px;padding-left:1.77px;">C130300013</div><div class="c" style="left:998px;width:50px;letter-spacing:-0.43px;padding-left:2.68px;">03</div><div class="c" style="left:1049px;width:70px;letter-spacing:-0.43px;padding-left:2.65px;">1140004</div></div>
<div class="rh" style="top:46px;"></div>
<div class="row alt" style="top:46px"><div class="c" style="left:0px;width:20px;padding-left:3.07px;">C</div><div class="c" style="left:21px;width:111px;letter-spacing:-0.38px;padding-left:2.97px;">C130300014/02</div><div class="c" style="left:133px;width:90px;letter-spacing:-0.68px;padding-left:2.06px;">Dormant</div><div class="c" style="left:224px;width:20px;"></div><div class="c" style="left:245px;width:91px;letter-spacing:0.15px;padding-left:8.90px;">16/04/2013</div><div class="c" style="left:337px;width:50px;letter-spacing:0.9px;padding-left:1.38px;">Un</div><div class="c" style="left:388px;width:100px;letter-spacing:-0.41px;text-align:right;padding-right:2.10px;">0,000</div><div class="c" style="left:489px;width:80px;letter-spacing:-0.41px;text-align:right;padding-right:1.85px;">20,000</div><div class="c" style="left:570px;width:81px;letter-spacing:-0.41px;text-align:right;padding-right:2.60px;">20,000</div><div class="c" style="left:652px;width:80px;letter-spacing:-0.41px;text-align:right;padding-right:2.35px;">0,000</div><div class="c" style="left:733px;width:90px;letter-spacing:0.15px;padding-left:8.40px;">16/04/2013</div><div class="c" style="left:824px;width:40px;padding-left:2.31px;">F</div><div class="c" style="left:865px;width:41px;letter-spacing:-1.5px;padding-left:2.52px;">CDE</div><div class="c" style="left:907px;width:90px;letter-spacing:-0.6px;padding-left:1.77px;">C130300014</div><div class="c" style="left:998px;width:50px;letter-spacing:-0.43px;padding-left:2.68px;">02</div><div class="c" style="left:1049px;width:70px;letter-spacing:-0.43px;padding-left:2.65px;">1140005</div></div>
<div class="rh" style="top:66px;"></div>
<div class="row" style="top:66px"><div class="c" style="left:0px;width:20px;padding-left:3.07px;">C</div><div class="c" style="left:21px;width:111px;letter-spacing:-0.38px;padding-left:2.97px;">C130300026/01</div><div class="c" style="left:133px;width:90px;letter-spacing:-0.68px;padding-left:2.06px;">Fenêtre alumin</div><div class="c" style="left:224px;width:20px;"></div><div class="c" style="left:245px;width:91px;letter-spacing:0.15px;padding-left:9.28px;">22/03/2013</div><div class="c" style="left:337px;width:50px;letter-spacing:0.9px;padding-left:1.38px;">Un</div><div class="c" style="left:388px;width:100px;letter-spacing:-0.41px;text-align:right;padding-right:2.10px;">0,000</div><div class="c" style="left:489px;width:80px;letter-spacing:-0.41px;text-align:right;padding-right:1.85px;">1,000</div><div class="c" style="left:570px;width:81px;letter-spacing:-0.41px;text-align:right;padding-right:2.60px;">1,000</div><div class="c" style="left:652px;width:80px;letter-spacing:-0.41px;text-align:right;padding-right:2.35px;">0,000</div><div class="c" style="left:733px;width:90px;letter-spacing:0.15px;padding-left:8.78px;">22/03/2013</div><div class="c" style="left:824px;width:40px;padding-left:2.31px;">F</div><div class="c" style="left:865px;width:41px;letter-spacing:-1.5px;padding-left:2.52px;">CDE</div><div class="c" style="left:907px;width:90px;letter-spacing:-0.6px;padding-left:1.77px;">C130300026</div><div class="c" style="left:998px;width:50px;letter-spacing:-0.43px;padding-left:2.68px;">01</div><div class="c" style="left:1049px;width:70px;letter-spacing:-0.43px;padding-left:3.18px;">0860001</div></div>
<div class="rh" style="top:86px;"></div>
<div class="row alt" style="top:86px"><div class="c" style="left:0px;width:20px;padding-left:3.07px;">C</div><div class="c" style="left:21px;width:111px;letter-spacing:-0.38px;padding-left:2.97px;">C130300026/02</div><div class="c" style="left:133px;width:90px;letter-spacing:-0.68px;padding-left:2.06px;">Menuiserie</div><div class="c" style="left:224px;width:20px;padding-left:2.31px;">R</div><div class="c" style="left:245px;width:91px;letter-spacing:0.15px;padding-left:8.90px;">17/12/2021</div><div class="c" style="left:337px;width:50px;letter-spacing:0.9px;padding-left:1.38px;">Un</div><div class="c" style="left:388px;width:100px;letter-spacing:-0.41px;text-align:right;padding-right:2.10px;">1,000</div><div class="c" style="left:489px;width:80px;letter-spacing:-0.41px;text-align:right;padding-right:1.85px;">1,000</div><div class="c" style="left:570px;width:81px;letter-spacing:-0.41px;text-align:right;padding-right:2.60px;">0,000</div><div class="c" style="left:652px;width:80px;letter-spacing:-0.41px;text-align:right;padding-right:2.35px;">0,000</div><div class="c" style="left:733px;width:90px;letter-spacing:0.15px;padding-left:8.78px;">24/11/2021</div><div class="c" style="left:824px;width:40px;padding-left:2.31px;">F</div><div class="c" style="left:865px;width:41px;letter-spacing:-1.5px;padding-left:2.52px;">CDE</div><div class="c" style="left:907px;width:90px;letter-spacing:-0.6px;padding-left:1.77px;">C130300026</div><div class="c" style="left:998px;width:50px;letter-spacing:-0.43px;padding-left:2.68px;">02</div><div class="c" style="left:1049px;width:70px;letter-spacing:-0.43px;"></div></div>
<div class="rh" style="top:106px;"></div>
<div class="row" style="top:106px"><div class="c" style="left:0px;width:20px;padding-left:3.07px;">C</div><div class="c" style="left:21px;width:111px;letter-spacing:-0.38px;padding-left:2.97px;">C130300028/01</div><div class="c" style="left:133px;width:90px;letter-spacing:-0.68px;padding-left:2.06px;">Fenêtre alumin</div><div class="c" style="left:224px;width:20px;"></div><div class="c" style="left:245px;width:91px;letter-spacing:0.15px;padding-left:9.43px;">02/04/2013</div><div class="c" style="left:337px;width:50px;letter-spacing:0.9px;padding-left:1.38px;">Un</div><div class="c" style="left:388px;width:100px;letter-spacing:-0.41px;text-align:right;padding-right:2.10px;">0,000</div><div class="c" style="left:489px;width:80px;letter-spacing:-0.41px;text-align:right;padding-right:1.85px;">100,000</div><div class="c" style="left:570px;width:81px;letter-spacing:-0.41px;text-align:right;padding-right:2.60px;">100,000</div><div class="c" style="left:652px;width:80px;letter-spacing:-0.41px;text-align:right;padding-right:2.35px;">0,000</div><div class="c" style="left:733px;width:90px;letter-spacing:0.15px;padding-left:8.93px;">02/04/2013</div><div class="c" style="left:824px;width:40px;padding-left:2.31px;">F</div><div class="c" style="left:865px;width:41px;letter-spacing:-1.5px;padding-left:2.52px;">CDE</div><div class="c" style="left:907px;width:90px;letter-spacing:-0.6px;padding-left:1.77px;">C130300028</div><div class="c" style="left:998px;width:50px;letter-spacing:-0.43px;padding-left:2.68px;">01</div><div class="c" style="left:1049px;width:70px;letter-spacing:-0.43px;padding-left:3.18px;">0870001</div></div>
<div class="rh" style="top:126px;"></div>
<div class="row alt" style="top:126px"><div class="c" style="left:0px;width:20px;padding-left:3.07px;">C</div><div class="c" style="left:21px;width:111px;letter-spacing:-0.38px;padding-left:2.97px;">C130300028/02</div><div class="c" style="left:133px;width:90px;letter-spacing:-0.68px;padding-left:2.06px;">Fenêtre alumin</div><div class="c" style="left:224px;width:20px;"></div><div class="c" style="left:245px;width:91px;letter-spacing:0.15px;padding-left:9.43px;">02/04/2013</div><div class="c" style="left:337px;width:50px;letter-spacing:0.9px;padding-left:1.38px;">Un</div><div class="c" style="left:388px;width:100px;letter-spacing:-0.41px;text-align:right;padding-right:2.10px;">0,000</div><div class="c" style="left:489px;width:80px;letter-spacing:-0.41px;text-align:right;padding-right:1.85px;">50,000</div><div class="c" style="left:570px;width:81px;letter-spacing:-0.41px;text-align:right;padding-right:2.60px;">50,000</div><div class="c" style="left:652px;width:80px;letter-spacing:-0.41px;text-align:right;padding-right:2.35px;">0,000</div><div class="c" style="left:733px;width:90px;letter-spacing:0.15px;padding-left:8.93px;">02/04/2013</div><div class="c" style="left:824px;width:40px;padding-left:2.31px;">F</div><div class="c" style="left:865px;width:41px;letter-spacing:-1.5px;padding-left:2.52px;">CDE</div><div class="c" style="left:907px;width:90px;letter-spacing:-0.6px;padding-left:1.77px;">C130300028</div><div class="c" style="left:998px;width:50px;letter-spacing:-0.43px;padding-left:2.68px;">02</div><div class="c" style="left:1049px;width:70px;letter-spacing:-0.43px;padding-left:3.18px;">0870002</div></div>
<div class="rh" style="top:146px;"></div>
<div class="row" style="top:146px"><div class="c" style="left:0px;width:20px;padding-left:3.07px;">C</div><div class="c" style="left:21px;width:111px;letter-spacing:-0.38px;padding-left:2.97px;">C130300030/01</div><div class="c" style="left:133px;width:90px;letter-spacing:-0.68px;padding-left:2.06px;">Fenêtre alumin</div><div class="c" style="left:224px;width:20px;"></div><div class="c" style="left:245px;width:91px;letter-spacing:0.15px;padding-left:9.43px;">02/04/2013</div><div class="c" style="left:337px;width:50px;letter-spacing:0.9px;padding-left:1.38px;">Un</div><div class="c" style="left:388px;width:100px;letter-spacing:-0.41px;text-align:right;padding-right:2.10px;">0,000</div><div class="c" style="left:489px;width:80px;letter-spacing:-0.41px;text-align:right;padding-right:1.85px;">100,000</div><div class="c" style="left:570px;width:81px;letter-spacing:-0.41px;text-align:right;padding-right:2.60px;">100,000</div><div class="c" style="left:652px;width:80px;letter-spacing:-0.41px;text-align:right;padding-right:2.35px;">0,000</div><div class="c" style="left:733px;width:90px;letter-spacing:0.15px;padding-left:8.93px;">02/04/2013</div><div class="c" style="left:824px;width:40px;padding-left:2.31px;">F</div><div class="c" style="left:865px;width:41px;letter-spacing:-1.5px;padding-left:2.52px;">CDE</div><div class="c" style="left:907px;width:90px;letter-spacing:-0.6px;padding-left:1.77px;">C130300030</div><div class="c" style="left:998px;width:50px;letter-spacing:-0.43px;padding-left:2.68px;">01</div><div class="c" style="left:1049px;width:70px;letter-spacing:-0.43px;padding-left:3.18px;">0880001</div></div>
<div class="rh" style="top:166px;"></div>
<div class="row alt" style="top:166px"><div class="c" style="left:0px;width:20px;padding-left:3.07px;">C</div><div class="c" style="left:21px;width:111px;letter-spacing:-0.38px;padding-left:2.97px;">C130300030/02</div><div class="c" style="left:133px;width:90px;letter-spacing:-0.68px;padding-left:2.06px;">FENETRE-PVC</div><div class="c" style="left:224px;width:20px;"></div><div class="c" style="left:245px;width:91px;letter-spacing:0.15px;padding-left:9.43px;">02/04/2013</div><div class="c" style="left:337px;width:50px;letter-spacing:0.9px;padding-left:1.38px;">Un</div><div class="c" style="left:388px;width:100px;letter-spacing:-0.41px;text-align:right;padding-right:2.10px;">0,000</div><div class="c" style="left:489px;width:80px;letter-spacing:-0.41px;text-align:right;padding-right:1.85px;">100,000</div><div class="c" style="left:570px;width:81px;letter-spacing:-0.41px;text-align:right;padding-right:2.60px;">100,000</div><div class="c" style="left:652px;width:80px;letter-spacing:-0.41px;text-align:right;padding-right:2.35px;">0,000</div><div class="c" style="left:733px;width:90px;letter-spacing:0.15px;padding-left:8.93px;">02/04/2013</div><div class="c" style="left:824px;width:40px;padding-left:2.31px;">F</div><div class="c" style="left:865px;width:41px;letter-spacing:-1.5px;padding-left:2.52px;">CDE</div><div class="c" style="left:907px;width:90px;letter-spacing:-0.6px;padding-left:1.77px;">C130300030</div><div class="c" style="left:998px;width:50px;letter-spacing:-0.43px;padding-left:2.68px;">02</div><div class="c" style="left:1049px;width:70px;letter-spacing:-0.43px;padding-left:3.18px;">0880001</div></div>
<div class="rh" style="top:186px;"></div>
<div class="row" style="top:186px"><div class="c" style="left:0px;width:20px;padding-left:3.07px;">C</div><div class="c" style="left:21px;width:111px;letter-spacing:-0.38px;padding-left:2.97px;">C130300031/01</div><div class="c" style="left:133px;width:90px;letter-spacing:-0.68px;padding-left:2.06px;">FENETRE-PVC</div><div class="c" style="left:224px;width:20px;"></div><div class="c" style="left:245px;width:91px;letter-spacing:0.15px;padding-left:9.43px;">02/04/2013</div><div class="c" style="left:337px;width:50px;letter-spacing:0.9px;padding-left:1.38px;">Un</div><div class="c" style="left:388px;width:100px;letter-spacing:-0.41px;text-align:right;padding-right:2.10px;">0,000</div><div class="c" style="left:489px;width:80px;letter-spacing:-0.41px;text-align:right;padding-right:1.85px;">25,000</div><div class="c" style="left:570px;width:81px;letter-spacing:-0.41px;text-align:right;padding-right:2.60px;">25,000</div><div class="c" style="left:652px;width:80px;letter-spacing:-0.41px;text-align:right;padding-right:2.35px;">0,000</div><div class="c" style="left:733px;width:90px;letter-spacing:0.15px;padding-left:8.93px;">02/04/2013</div><div class="c" style="left:824px;width:40px;padding-left:2.31px;">F</div><div class="c" style="left:865px;width:41px;letter-spacing:-1.5px;padding-left:2.52px;">CDE</div><div class="c" style="left:907px;width:90px;letter-spacing:-0.6px;padding-left:1.77px;">C130300031</div><div class="c" style="left:998px;width:50px;letter-spacing:-0.43px;padding-left:2.68px;">01</div><div class="c" style="left:1049px;width:70px;letter-spacing:-0.43px;padding-left:3.18px;">0930001</div></div>
<div class="rh" style="top:206px;"></div>
<div class="row alt" style="top:206px"><div class="c" style="left:0px;width:20px;padding-left:3.07px;">C</div><div class="c" style="left:21px;width:111px;letter-spacing:-0.38px;padding-left:2.97px;">C130400038/01</div><div class="c" style="left:133px;width:90px;letter-spacing:-0.68px;padding-left:2.06px;">Dormant</div><div class="c" style="left:224px;width:20px;"></div><div class="c" style="left:245px;width:91px;letter-spacing:0.15px;padding-left:9.28px;">26/04/2013</div><div class="c" style="left:337px;width:50px;letter-spacing:0.9px;padding-left:1.38px;">Un</div><div class="c" style="left:388px;width:100px;letter-spacing:-0.41px;text-align:right;padding-right:2.10px;">0,000</div><div class="c" style="left:489px;width:80px;letter-spacing:-0.41px;text-align:right;padding-right:1.85px;">12,000</div><div class="c" style="left:570px;width:81px;letter-spacing:-0.41px;text-align:right;padding-right:2.60px;">12,000</div><div class="c" style="left:652px;width:80px;letter-spacing:-0.41px;text-align:right;padding-right:2.35px;">0,000</div><div class="c" style="left:733px;width:90px;letter-spacing:0.15px;padding-left:8.78px;">26/04/2013</div><div class="c" style="left:824px;width:40px;padding-left:2.31px;">F</div><div class="c" style="left:865px;width:41px;letter-spacing:-1.5px;padding-left:2.52px;">CDE</div><div class="c" style="left:907px;width:90px;letter-spacing:-0.6px;padding-left:1.77px;">C130400038</div><div class="c" style="left:998px;width:50px;letter-spacing:-0.43px;padding-left:2.68px;">01</div><div class="c" style="left:1049px;width:70px;letter-spacing:-0.43px;padding-left:2.65px;">1140002</div></div>
<div class="rh" style="top:226px;"></div>
<div class="row" style="top:226px"><div class="c" style="left:0px;width:20px;padding-left:3.07px;">C</div><div class="c" style="left:21px;width:111px;letter-spacing:-0.38px;padding-left:2.97px;">C130500003/02</div><div class="c" style="left:133px;width:90px;letter-spacing:-0.68px;padding-left:2.06px;">FENETRE-PVC</div><div class="c" style="left:224px;width:20px;"></div><div class="c" style="left:245px;width:91px;letter-spacing:0.15px;padding-left:9.43px;">06/05/2014</div><div class="c" style="left:337px;width:50px;letter-spacing:0.9px;padding-left:1.38px;">Un</div><div class="c" style="left:388px;width:100px;letter-spacing:-0.41px;text-align:right;padding-right:2.10px;">0,000</div><div class="c" style="left:489px;width:80px;letter-spacing:-0.41px;text-align:right;padding-right:1.85px;">2,000</div><div class="c" style="left:570px;width:81px;letter-spacing:-0.41px;text-align:right;padding-right:2.60px;">2,000</div><div class="c" style="left:652px;width:80px;letter-spacing:-0.41px;text-align:right;padding-right:2.35px;">0,000</div><div class="c" style="left:733px;width:90px;letter-spacing:0.15px;padding-left:8.93px;">06/05/2014</div><div class="c" style="left:824px;width:40px;padding-left:2.31px;">F</div><div class="c" style="left:865px;width:41px;letter-spacing:-1.5px;padding-left:2.52px;">CDE</div><div class="c" style="left:907px;width:90px;letter-spacing:-0.6px;padding-left:1.77px;">C130500003</div><div class="c" style="left:998px;width:50px;letter-spacing:-0.43px;padding-left:2.68px;">02</div><div class="c" style="left:1049px;width:70px;letter-spacing:-0.43px;padding-left:2.65px;">1480001</div></div>
<div class="rh" style="top:246px;"></div>
<div class="row alt" style="top:246px"><div class="c" style="left:0px;width:20px;padding-left:3.07px;">C</div><div class="c" style="left:21px;width:111px;letter-spacing:-0.38px;padding-left:2.97px;">C130500011/01</div><div class="c" style="left:133px;width:90px;letter-spacing:-0.68px;padding-left:2.06px;">Fenêtre alumin</div><div class="c" style="left:224px;width:20px;"></div><div class="c" style="left:245px;width:91px;letter-spacing:0.15px;padding-left:8.90px;">10/05/2013</div><div class="c" style="left:337px;width:50px;letter-spacing:0.9px;padding-left:1.38px;">Un</div><div class="c" style="left:388px;width:100px;letter-spacing:-0.41px;text-align:right;padding-right:2.10px;">0,000</div><div class="c" style="left:489px;width:80px;letter-spacing:-0.41px;text-align:right;padding-right:1.85px;">1,000</div><div class="c" style="left:570px;width:81px;letter-spacing:-0.41px;text-align:right;padding-right:2.60px;">1,000</div><div class="c" style="left:652px;width:80px;letter-spacing:-0.41px;text-align:right;padding-right:2.35px;">0,000</div><div class="c" style="left:733px;width:90px;letter-spacing:0.15px;padding-left:8.40px;">10/05/2013</div><div class="c" style="left:824px;width:40px;padding-left:2.31px;">F</div><div class="c" style="left:865px;width:41px;letter-spacing:-1.5px;padding-left:2.52px;">CDE</div><div class="c" style="left:907px;width:90px;letter-spacing:-0.6px;padding-left:1.77px;">C130500011</div><div class="c" style="left:998px;width:50px;letter-spacing:-0.43px;padding-left:2.68px;">01</div><div class="c" style="left:1049px;width:70px;letter-spacing:-0.43px;padding-left:2.65px;">1420001</div></div>
<div class="rh" style="top:266px;"></div>
<div class="row" style="top:266px"><div class="c" style="left:0px;width:20px;padding-left:3.07px;">C</div><div class="c" style="left:21px;width:111px;letter-spacing:-0.38px;padding-left:2.97px;">C130500013/01</div><div class="c" style="left:133px;width:90px;letter-spacing:-0.68px;padding-left:2.06px;">FENETRE-PVC</div><div class="c" style="left:224px;width:20px;"></div><div class="c" style="left:245px;width:91px;letter-spacing:0.15px;padding-left:8.90px;">16/07/2013</div><div class="c" style="left:337px;width:50px;letter-spacing:0.9px;padding-left:1.38px;">Un</div><div class="c" style="left:388px;width:100px;letter-spacing:-0.41px;text-align:right;padding-right:2.10px;">0,000</div><div class="c" style="left:489px;width:80px;letter-spacing:-0.41px;text-align:right;padding-right:1.85px;">1,000</div><div class="c" style="left:570px;width:81px;letter-spacing:-0.41px;text-align:right;padding-right:2.60px;">1,000</div><div class="c" style="left:652px;width:80px;letter-spacing:-0.41px;text-align:right;padding-right:2.35px;">0,000</div><div class="c" style="left:733px;width:90px;letter-spacing:0.15px;padding-left:8.40px;">16/07/2013</div><div class="c" style="left:824px;width:40px;padding-left:2.31px;">F</div><div class="c" style="left:865px;width:41px;letter-spacing:-1.5px;padding-left:2.52px;">CDE</div><div class="c" style="left:907px;width:90px;letter-spacing:-0.6px;padding-left:1.77px;">C130500013</div><div class="c" style="left:998px;width:50px;letter-spacing:-0.43px;padding-left:2.68px;">01</div><div class="c" style="left:1049px;width:70px;letter-spacing:-0.43px;padding-left:3.20px;">3440003</div></div>
<div class="rh" style="top:286px;"></div>
<div class="row alt" style="top:286px"><div class="c" style="left:0px;width:20px;padding-left:3.07px;">C</div><div class="c" style="left:21px;width:111px;letter-spacing:-0.38px;padding-left:2.97px;">C130500014/01</div><div class="c" style="left:133px;width:90px;letter-spacing:-0.68px;padding-left:2.06px;">FENETRE-PVC</div><div class="c" style="left:224px;width:20px;"></div><div class="c" style="left:245px;width:91px;letter-spacing:0.15px;padding-left:9.43px;">02/07/2013</div><div class="c" style="left:337px;width:50px;letter-spacing:0.9px;padding-left:1.38px;">Un</div><div class="c" style="left:388px;width:100px;letter-spacing:-0.41px;text-align:right;padding-right:2.10px;">0,000</div><div class="c" style="left:489px;width:80px;letter-spacing:-0.41px;text-align:right;padding-right:1.85px;">1,000</div><div class="c" style="left:570px;width:81px;letter-spacing:-0.41px;text-align:right;padding-right:2.60px;">1,000</div><div class="c" style="left:652px;width:80px;letter-spacing:-0.41px;text-align:right;padding-right:2.35px;">0,000</div><div class="c" style="left:733px;width:90px;letter-spacing:0.15px;padding-left:8.93px;">02/07/2013</div><div class="c" style="left:824px;width:40px;padding-left:2.31px;">F</div><div class="c" style="left:865px;width:41px;letter-spacing:-1.5px;padding-left:2.52px;">CDE</div><div class="c" style="left:907px;width:90px;letter-spacing:-0.6px;padding-left:1.77px;">C130500014</div><div class="c" style="left:998px;width:50px;letter-spacing:-0.43px;padding-left:2.68px;">01</div><div class="c" style="left:1049px;width:70px;letter-spacing:-0.43px;padding-left:3.20px;">3440004</div></div>
<div class="rh" style="top:306px;"></div>
<div class="row" style="top:306px"><div class="c" style="left:0px;width:20px;padding-left:3.07px;">C</div><div class="c" style="left:21px;width:111px;letter-spacing:-0.38px;padding-left:2.97px;">C150400007/03</div><div class="c" style="left:133px;width:90px;letter-spacing:-0.68px;padding-left:2.06px;">Fenêtre alumin</div><div class="c" style="left:224px;width:20px;padding-left:2.31px;">R</div><div class="c" style="left:245px;width:91px;letter-spacing:0.15px;padding-left:9.43px;">02/04/2015</div><div class="c" style="left:337px;width:50px;letter-spacing:0.9px;padding-left:1.38px;">Un</div><div class="c" style="left:388px;width:100px;letter-spacing:-0.41px;text-align:right;padding-right:2.10px;">1,000</div><div class="c" style="left:489px;width:80px;letter-spacing:-0.41px;text-align:right;padding-right:1.85px;">1,000</div><div class="c" style="left:570px;width:81px;letter-spacing:-0.41px;text-align:right;padding-right:2.60px;">0,000</div><div class="c" style="left:652px;width:80px;letter-spacing:-0.41px;text-align:right;padding-right:2.35px;">0,000</div><div class="c" style="left:733px;width:90px;letter-spacing:0.15px;padding-left:8.93px;">02/04/2015</div><div class="c" style="left:824px;width:40px;padding-left:2.31px;">F</div><div class="c" style="left:865px;width:41px;letter-spacing:-1.5px;padding-left:2.52px;">CDE</div><div class="c" style="left:907px;width:90px;letter-spacing:-0.6px;padding-left:1.77px;">C150400007</div><div class="c" style="left:998px;width:50px;letter-spacing:-0.43px;padding-left:2.68px;">03</div><div class="c" style="left:1049px;width:70px;letter-spacing:-0.43px;"></div></div>
<div class="rh" style="top:326px;"></div>
<div class="row alt" style="top:326px"><div class="c" style="left:0px;width:20px;padding-left:3.07px;">C</div><div class="c" style="left:21px;width:111px;letter-spacing:-0.38px;padding-left:2.97px;">C150400007/06</div><div class="c" style="left:133px;width:90px;letter-spacing:-0.52px;padding-left:2.06px;">Menuiserie PVC</div><div class="c" style="left:224px;width:20px;padding-left:2.31px;">R</div><div class="c" style="left:245px;width:91px;letter-spacing:0.15px;padding-left:9.43px;">02/04/2015</div><div class="c" style="left:337px;width:50px;letter-spacing:0.9px;padding-left:1.38px;">Un</div><div class="c" style="left:388px;width:100px;letter-spacing:-0.41px;text-align:right;padding-right:2.10px;">15,000</div><div class="c" style="left:489px;width:80px;letter-spacing:-0.41px;text-align:right;padding-right:1.85px;">15,000</div><div class="c" style="left:570px;width:81px;letter-spacing:-0.41px;text-align:right;padding-right:2.60px;">0,000</div><div class="c" style="left:652px;width:80px;letter-spacing:-0.41px;text-align:right;padding-right:2.35px;">0,000</div><div class="c" style="left:733px;width:90px;letter-spacing:0.15px;padding-left:8.93px;">02/04/2015</div><div class="c" style="left:824px;width:40px;padding-left:2.31px;">F</div><div class="c" style="left:865px;width:41px;letter-spacing:-1.5px;padding-left:2.52px;">CDE</div><div class="c" style="left:907px;width:90px;letter-spacing:-0.6px;padding-left:1.77px;">C150400007</div><div class="c" style="left:998px;width:50px;letter-spacing:-0.43px;padding-left:2.68px;">06</div><div class="c" style="left:1049px;width:70px;letter-spacing:-0.43px;"></div></div>
<div class="rh" style="top:346px;"></div>
<div class="row" style="top:346px"><div class="c" style="left:0px;width:20px;padding-left:3.07px;">C</div><div class="c" style="left:21px;width:111px;letter-spacing:-0.38px;padding-left:2.97px;">C150400007/08</div><div class="c" style="left:133px;width:90px;letter-spacing:-0.68px;padding-left:2.06px;">Dormant</div><div class="c" style="left:224px;width:20px;"></div><div class="c" style="left:245px;width:91px;letter-spacing:0.15px;padding-left:9.43px;">02/04/2015</div><div class="c" style="left:337px;width:50px;letter-spacing:0.9px;padding-left:1.38px;">Un</div><div class="c" style="left:388px;width:100px;letter-spacing:-0.41px;text-align:right;padding-right:2.10px;">0,000</div><div class="c" style="left:489px;width:80px;letter-spacing:-0.41px;text-align:right;padding-right:1.85px;">6,000</div><div class="c" style="left:570px;width:81px;letter-spacing:-0.41px;text-align:right;padding-right:2.60px;">6,000</div><div class="c" style="left:652px;width:80px;letter-spacing:-0.41px;text-align:right;padding-right:2.35px;">0,000</div><div class="c" style="left:733px;width:90px;letter-spacing:0.15px;padding-left:8.93px;">02/04/2015</div><div class="c" style="left:824px;width:40px;padding-left:2.31px;">F</div><div class="c" style="left:865px;width:41px;letter-spacing:-1.5px;padding-left:2.52px;">CDE</div><div class="c" style="left:907px;width:90px;letter-spacing:-0.6px;padding-left:1.77px;">C150400007</div><div class="c" style="left:998px;width:50px;letter-spacing:-0.43px;padding-left:2.68px;">08</div><div class="c" style="left:1049px;width:70px;letter-spacing:-0.43px;padding-left:2.65px;">1040001</div></div>
<div class="rh" style="top:366px;"></div>
<div class="row alt" style="top:366px"><div class="c" style="left:0px;width:20px;padding-left:3.07px;">C</div><div class="c" style="left:21px;width:111px;letter-spacing:-0.38px;padding-left:2.97px;">C150500002/01</div><div class="c" style="left:133px;width:90px;letter-spacing:-0.68px;padding-left:2.06px;">Dormant</div><div class="c" style="left:224px;width:20px;"></div><div class="c" style="left:245px;width:91px;letter-spacing:0.15px;padding-left:9.43px;">05/06/2015</div><div class="c" style="left:337px;width:50px;letter-spacing:0.9px;padding-left:1.38px;">Un</div><div class="c" style="left:388px;width:100px;letter-spacing:-0.41px;text-align:right;padding-right:2.10px;">0,000</div><div class="c" style="left:489px;width:80px;letter-spacing:-0.41px;text-align:right;padding-right:1.85px;">15,000</div><div class="c" style="left:570px;width:81px;letter-spacing:-0.41px;text-align:right;padding-right:2.60px;">15,000</div><div class="c" style="left:652px;width:80px;letter-spacing:-0.41px;text-align:right;padding-right:2.35px;">0,000</div><div class="c" style="left:733px;width:90px;letter-spacing:0.15px;padding-left:8.93px;">05/06/2015</div><div class="c" style="left:824px;width:40px;padding-left:2.31px;">F</div><div class="c" style="left:865px;width:41px;letter-spacing:-1.5px;padding-left:2.52px;">CDE</div><div class="c" style="left:907px;width:90px;letter-spacing:-0.6px;padding-left:1.77px;">C150500002</div><div class="c" style="left:998px;width:50px;letter-spacing:-0.43px;padding-left:2.68px;">01</div><div class="c" style="left:1049px;width:70px;letter-spacing:-0.43px;padding-left:2.65px;">1550001</div></div>
<div class="rh" style="top:386px;"></div>
<div class="row" style="top:386px"><div class="c" style="left:0px;width:20px;padding-left:3.07px;">C</div><div class="c" style="left:21px;width:111px;letter-spacing:-0.38px;padding-left:2.97px;">C150500002/05</div><div class="c" style="left:133px;width:90px;letter-spacing:-0.52px;padding-left:2.06px;">Menuiserie PVC</div><div class="c" style="left:224px;width:20px;"></div><div class="c" style="left:245px;width:91px;letter-spacing:0.15px;padding-left:9.43px;">05/06/2015</div><div class="c" style="left:337px;width:50px;letter-spacing:0.9px;padding-left:1.38px;">Un</div><div class="c" style="left:388px;width:100px;letter-spacing:-0.41px;text-align:right;padding-right:2.10px;">0,000</div><div class="c" style="left:489px;width:80px;letter-spacing:-0.41px;text-align:right;padding-right:1.85px;">2,000</div><div class="c" style="left:570px;width:81px;letter-spacing:-0.41px;text-align:right;padding-right:2.60px;">2,000</div><div class="c" style="left:652px;width:80px;letter-spacing:-0.41px;text-align:right;padding-right:2.35px;">0,000</div><div class="c" style="left:733px;width:90px;letter-spacing:0.15px;padding-left:8.93px;">05/06/2015</div><div class="c" style="left:824px;width:40px;padding-left:2.31px;">F</div><div class="c" style="left:865px;width:41px;letter-spacing:-1.5px;padding-left:2.52px;">CDE</div><div class="c" style="left:907px;width:90px;letter-spacing:-0.6px;padding-left:1.77px;">C150500002</div><div class="c" style="left:998px;width:50px;letter-spacing:-0.43px;padding-left:2.68px;">05</div><div class="c" style="left:1049px;width:70px;letter-spacing:-0.43px;padding-left:2.65px;">1550001</div></div>
<div class="rh" style="top:406px;"></div>
<div class="row alt" style="top:406px"><div class="c" style="left:0px;width:20px;padding-left:3.07px;">C</div><div class="c" style="left:21px;width:111px;letter-spacing:-0.38px;padding-left:2.97px;">C150500003/01</div><div class="c" style="left:133px;width:90px;letter-spacing:-0.68px;padding-left:2.06px;">Dormant</div><div class="c" style="left:224px;width:20px;"></div><div class="c" style="left:245px;width:91px;letter-spacing:0.15px;padding-left:9.28px;">22/05/2015</div><div class="c" style="left:337px;width:50px;letter-spacing:0.9px;padding-left:1.38px;">Un</div><div class="c" style="left:388px;width:100px;letter-spacing:-0.41px;text-align:right;padding-right:2.10px;">0,000</div><div class="c" style="left:489px;width:80px;letter-spacing:-0.41px;text-align:right;padding-right:1.85px;">15,000</div><div class="c" style="left:570px;width:81px;letter-spacing:-0.41px;text-align:right;padding-right:2.60px;">15,000</div><div class="c" style="left:652px;width:80px;letter-spacing:-0.41px;text-align:right;padding-right:2.35px;">0,000</div><div class="c" style="left:733px;width:90px;letter-spacing:0.15px;padding-left:8.78px;">22/05/2015</div><div class="c" style="left:824px;width:40px;padding-left:2.31px;">F</div><div class="c" style="left:865px;width:41px;letter-spacing:-1.5px;padding-left:2.52px;">CDE</div><div class="c" style="left:907px;width:90px;letter-spacing:-0.6px;padding-left:1.77px;">C150500003</div><div class="c" style="left:998px;width:50px;letter-spacing:-0.43px;padding-left:2.68px;">01</div><div class="c" style="left:1049px;width:70px;letter-spacing:-0.43px;padding-left:2.65px;">1550001</div></div>
<div class="rh" style="top:426px;"></div>
<div class="row" style="top:426px"><div class="c" style="left:0px;width:20px;padding-left:3.07px;">C</div><div class="c" style="left:21px;width:111px;letter-spacing:-0.38px;padding-left:2.97px;">C150500003/05</div><div class="c" style="left:133px;width:90px;letter-spacing:-0.52px;padding-left:2.06px;">Menuiserie PVC</div><div class="c" style="left:224px;width:20px;"></div><div class="c" style="left:245px;width:91px;letter-spacing:0.15px;padding-left:9.28px;">22/05/2015</div><div class="c" style="left:337px;width:50px;letter-spacing:0.9px;padding-left:1.38px;">Un</div><div class="c" style="left:388px;width:100px;letter-spacing:-0.41px;text-align:right;padding-right:2.10px;">0,000</div><div class="c" style="left:489px;width:80px;letter-spacing:-0.41px;text-align:right;padding-right:1.85px;">2,000</div><div class="c" style="left:570px;width:81px;letter-spacing:-0.41px;text-align:right;padding-right:2.60px;">2,000</div><div class="c" style="left:652px;width:80px;letter-spacing:-0.41px;text-align:right;padding-right:2.35px;">0,000</div><div class="c" style="left:733px;width:90px;letter-spacing:0.15px;padding-left:8.78px;">22/05/2015</div><div class="c" style="left:824px;width:40px;padding-left:2.31px;">F</div><div class="c" style="left:865px;width:41px;letter-spacing:-1.5px;padding-left:2.52px;">CDE</div><div class="c" style="left:907px;width:90px;letter-spacing:-0.6px;padding-left:1.77px;">C150500003</div><div class="c" style="left:998px;width:50px;letter-spacing:-0.43px;padding-left:2.68px;">05</div><div class="c" style="left:1049px;width:70px;letter-spacing:-0.43px;padding-left:2.65px;">1550001</div></div>
<div class="rh" style="top:446px;"></div>
<div class="row alt" style="top:446px"><div class="c" style="left:0px;width:20px;padding-left:3.07px;">C</div><div class="c" style="left:21px;width:111px;letter-spacing:-0.38px;padding-left:2.97px;">C150500005/01</div><div class="c" style="left:133px;width:90px;letter-spacing:-0.68px;padding-left:2.06px;">Dormant</div><div class="c" style="left:224px;width:20px;"></div><div class="c" style="left:245px;width:91px;letter-spacing:0.15px;padding-left:9.43px;">05/05/2015</div><div class="c" style="left:337px;width:50px;letter-spacing:0.9px;padding-left:1.38px;">Un</div><div class="c" style="left:388px;width:100px;letter-spacing:-0.41px;text-align:right;padding-right:2.10px;">0,000</div><div class="c" style="left:489px;width:80px;letter-spacing:-0.41px;text-align:right;padding-right:1.85px;">10,000</div><div class="c" style="left:570px;width:81px;letter-spacing:-0.41px;text-align:right;padding-right:2.60px;">10,000</div><div class="c" style="left:652px;width:80px;letter-spacing:-0.41px;text-align:right;padding-right:2.35px;">0,000</div><div class="c" style="left:733px;width:90px;letter-spacing:0.15px;padding-left:8.93px;">05/05/2015</div><div class="c" style="left:824px;width:40px;padding-left:2.31px;">F</div><div class="c" style="left:865px;width:41px;letter-spacing:-1.5px;padding-left:2.52px;">CDE</div><div class="c" style="left:907px;width:90px;letter-spacing:-0.6px;padding-left:1.77px;">C150500005</div><div class="c" style="left:998px;width:50px;letter-spacing:-0.43px;padding-left:2.68px;">01</div><div class="c" style="left:1049px;width:70px;letter-spacing:-0.43px;padding-left:2.65px;">1380001</div></div>
<div class="rh" style="top:466px;"></div>
<div class="row" style="top:466px"><div class="c" style="left:0px;width:20px;padding-left:3.07px;">C</div><div class="c" style="left:21px;width:111px;letter-spacing:-0.38px;padding-left:2.97px;">C150500005/02</div><div class="c" style="left:133px;width:90px;letter-spacing:-0.52px;padding-left:2.06px;">Menuiserie PVC</div><div class="c" style="left:224px;width:20px;"></div><div class="c" style="left:245px;width:91px;letter-spacing:0.15px;padding-left:9.43px;">05/05/2015</div><div class="c" style="left:337px;width:50px;letter-spacing:0.9px;padding-left:1.38px;">Un</div><div class="c" style="left:388px;width:100px;letter-spacing:-0.41px;text-align:right;padding-right:2.10px;">0,000</div><div class="c" style="left:489px;width:80px;letter-spacing:-0.41px;text-align:right;padding-right:1.85px;">1,000</div><div class="c" style="left:570px;width:81px;letter-spacing:-0.41px;text-align:right;padding-right:2.60px;">1,000</div><div class="c" style="left:652px;width:80px;letter-spacing:-0.41px;text-align:right;padding-right:2.35px;">0,000</div><div class="c" style="left:733px;width:90px;letter-spacing:0.15px;padding-left:8.93px;">05/05/2015</div><div class="c" style="left:824px;width:40px;padding-left:2.31px;">F</div><div class="c" style="left:865px;width:41px;letter-spacing:-1.5px;padding-left:2.52px;">CDE</div><div class="c" style="left:907px;width:90px;letter-spacing:-0.6px;padding-left:1.77px;">C150500005</div><div class="c" style="left:998px;width:50px;letter-spacing:-0.43px;padding-left:2.68px;">02</div><div class="c" style="left:1049px;width:70px;letter-spacing:-0.43px;padding-left:2.65px;">1380001</div></div>
<div class="rh" style="top:486px;"></div>
<div class="row alt" style="top:486px"><div class="c" style="left:0px;width:20px;padding-left:3.07px;">C</div><div class="c" style="left:21px;width:111px;letter-spacing:-0.38px;padding-left:2.97px;">C150500007/01</div><div class="c" style="left:133px;width:90px;letter-spacing:-0.52px;padding-left:2.06px;">Menuiserie PVC</div><div class="c" style="left:224px;width:20px;"></div><div class="c" style="left:245px;width:91px;letter-spacing:0.15px;padding-left:9.28px;">27/05/2015</div><div class="c" style="left:337px;width:50px;letter-spacing:0.9px;padding-left:1.38px;">Un</div><div class="c" style="left:388px;width:100px;letter-spacing:-0.41px;text-align:right;padding-right:2.10px;">0,000</div><div class="c" style="left:489px;width:80px;letter-spacing:-0.41px;text-align:right;padding-right:1.85px;">1,000</div><div class="c" style="left:570px;width:81px;letter-spacing:-0.41px;text-align:right;padding-right:2.60px;">1,000</div><div class="c" style="left:652px;width:80px;letter-spacing:-0.41px;text-align:right;padding-right:2.35px;">0,000</div><div class="c" style="left:733px;width:90px;letter-spacing:0.15px;padding-left:8.78px;">27/05/2015</div><div class="c" style="left:824px;width:40px;padding-left:2.31px;">F</div><div class="c" style="left:865px;width:41px;letter-spacing:-1.5px;padding-left:2.52px;">CDE</div><div class="c" style="left:907px;width:90px;letter-spacing:-0.6px;padding-left:1.77px;">C150500007</div><div class="c" style="left:998px;width:50px;letter-spacing:-0.43px;padding-left:2.68px;">01</div><div class="c" style="left:1049px;width:70px;letter-spacing:-0.43px;padding-left:2.65px;">1470001</div></div>
<div class="rh" style="top:506px;"></div>
<div class="row" style="top:506px"><div class="c" style="left:0px;width:20px;padding-left:3.07px;">C</div><div class="c" style="left:21px;width:111px;letter-spacing:-0.38px;padding-left:2.97px;">C150500010/01</div><div class="c" style="left:133px;width:90px;letter-spacing:-0.52px;padding-left:2.06px;">Menuiserie PVC</div><div class="c" style="left:224px;width:20px;"></div><div class="c" style="left:245px;width:91px;letter-spacing:0.15px;padding-left:9.28px;">28/05/2015</div><div class="c" style="left:337px;width:50px;letter-spacing:0.9px;padding-left:1.38px;">Un</div><div class="c" style="left:388px;width:100px;letter-spacing:-0.41px;text-align:right;padding-right:2.10px;">0,000</div><div class="c" style="left:489px;width:80px;letter-spacing:-0.41px;text-align:right;padding-right:1.85px;">1,000</div><div class="c" style="left:570px;width:81px;letter-spacing:-0.41px;text-align:right;padding-right:2.60px;">1,000</div><div class="c" style="left:652px;width:80px;letter-spacing:-0.41px;text-align:right;padding-right:2.35px;">0,000</div><div class="c" style="left:733px;width:90px;letter-spacing:0.15px;padding-left:8.78px;">28/05/2015</div><div class="c" style="left:824px;width:40px;padding-left:2.31px;">F</div><div class="c" style="left:865px;width:41px;letter-spacing:-1.5px;padding-left:2.52px;">CDE</div><div class="c" style="left:907px;width:90px;letter-spacing:-0.6px;padding-left:1.77px;">C150500010</div><div class="c" style="left:998px;width:50px;letter-spacing:-0.43px;padding-left:2.68px;">01</div><div class="c" style="left:1049px;width:70px;letter-spacing:-0.43px;padding-left:2.65px;">1550001</div></div>
<div class="rh" style="top:526px;"></div>
<div class="row alt" style="top:526px"><div class="c" style="left:0px;width:20px;padding-left:3.07px;">C</div><div class="c" style="left:21px;width:111px;letter-spacing:-0.38px;padding-left:2.97px;">C150500015/01</div><div class="c" style="left:133px;width:90px;letter-spacing:-0.52px;padding-left:2.06px;">Menuiserie PVC</div><div class="c" style="left:224px;width:20px;"></div><div class="c" style="left:245px;width:91px;letter-spacing:0.15px;padding-left:9.28px;">29/05/2015</div><div class="c" style="left:337px;width:50px;letter-spacing:0.9px;padding-left:1.38px;">Un</div><div class="c" style="left:388px;width:100px;letter-spacing:-0.41px;text-align:right;padding-right:2.10px;">0,000</div><div class="c" style="left:489px;width:80px;letter-spacing:-0.41px;text-align:right;padding-right:1.85px;">10,000</div><div class="c" style="left:570px;width:81px;letter-spacing:-0.41px;text-align:right;padding-right:2.60px;">10,000</div><div class="c" style="left:652px;width:80px;letter-spacing:-0.41px;text-align:right;padding-right:2.35px;">0,000</div><div class="c" style="left:733px;width:90px;letter-spacing:0.15px;padding-left:8.78px;">29/05/2015</div><div class="c" style="left:824px;width:40px;padding-left:2.31px;">F</div><div class="c" style="left:865px;width:41px;letter-spacing:-1.5px;padding-left:2.52px;">CDE</div><div class="c" style="left:907px;width:90px;letter-spacing:-0.6px;padding-left:1.77px;">C150500015</div><div class="c" style="left:998px;width:50px;letter-spacing:-0.43px;padding-left:2.68px;">01</div><div class="c" style="left:1049px;width:70px;letter-spacing:-0.43px;padding-left:2.65px;">1550001</div></div>
<div class="rh" style="top:546px;"></div>
<div class="row" style="top:546px"><div class="c" style="left:0px;width:20px;padding-left:3.07px;">C</div><div class="c" style="left:21px;width:111px;letter-spacing:-0.38px;padding-left:2.97px;">C150600003/01</div><div class="c" style="left:133px;width:90px;letter-spacing:-0.52px;padding-left:2.06px;">Menuiserie PVC</div><div class="c" style="left:224px;width:20px;"></div><div class="c" style="left:245px;width:91px;letter-spacing:0.15px;padding-left:9.43px;">04/06/2015</div><div class="c" style="left:337px;width:50px;letter-spacing:0.9px;padding-left:1.38px;">Un</div><div class="c" style="left:388px;width:100px;letter-spacing:-0.41px;text-align:right;padding-right:2.10px;">0,000</div><div class="c" style="left:489px;width:80px;letter-spacing:-0.41px;text-align:right;padding-right:1.85px;">1,000</div><div class="c" style="left:570px;width:81px;letter-spacing:-0.41px;text-align:right;padding-right:2.60px;">1,000</div><div class="c" style="left:652px;width:80px;letter-spacing:-0.41px;text-align:right;padding-right:2.35px;">0,000</div><div class="c" style="left:733px;width:90px;letter-spacing:0.15px;padding-left:8.93px;">04/06/2015</div><div class="c" style="left:824px;width:40px;padding-left:2.31px;">F</div><div class="c" style="left:865px;width:41px;letter-spacing:-1.5px;padding-left:2.52px;">CDE</div><div class="c" style="left:907px;width:90px;letter-spacing:-0.6px;padding-left:1.77px;">C150600003</div><div class="c" style="left:998px;width:50px;letter-spacing:-0.43px;padding-left:2.68px;">01</div><div class="c" style="left:1049px;width:70px;letter-spacing:-0.43px;padding-left:2.65px;">1550001</div></div>
<div class="rh" style="top:566px;"></div>
<div class="row alt" style="top:566px"><div class="c" style="left:0px;width:20px;padding-left:3.07px;">C</div><div class="c" style="left:21px;width:111px;letter-spacing:-0.38px;padding-left:2.97px;">C150600014/01</div><div class="c" style="left:133px;width:90px;letter-spacing:-0.52px;padding-left:2.06px;">Menuiserie PVC</div><div class="c" style="left:224px;width:20px;"></div><div class="c" style="left:245px;width:91px;letter-spacing:0.15px;padding-left:9.43px;">05/06/2015</div><div class="c" style="left:337px;width:50px;letter-spacing:0.9px;padding-left:1.38px;">Un</div><div class="c" style="left:388px;width:100px;letter-spacing:-0.41px;text-align:right;padding-right:2.10px;">0,000</div><div class="c" style="left:489px;width:80px;letter-spacing:-0.41px;text-align:right;padding-right:1.85px;">10,000</div><div class="c" style="left:570px;width:81px;letter-spacing:-0.41px;text-align:right;padding-right:2.60px;">10,000</div><div class="c" style="left:652px;width:80px;letter-spacing:-0.41px;text-align:right;padding-right:2.35px;">0,000</div><div class="c" style="left:733px;width:90px;letter-spacing:0.15px;padding-left:8.93px;">05/06/2015</div><div class="c" style="left:824px;width:40px;padding-left:2.31px;">F</div><div class="c" style="left:865px;width:41px;letter-spacing:-1.5px;padding-left:2.52px;">CDE</div><div class="c" style="left:907px;width:90px;letter-spacing:-0.6px;padding-left:1.77px;">C150600014</div><div class="c" style="left:998px;width:50px;letter-spacing:-0.43px;padding-left:2.68px;">01</div><div class="c" style="left:1049px;width:70px;letter-spacing:-0.43px;padding-left:2.65px;">1560002</div></div>
<div class="rh" style="top:586px;"></div>
<div class="row" style="top:586px"><div class="c" style="left:0px;width:20px;padding-left:3.07px;">C</div><div class="c" style="left:21px;width:111px;letter-spacing:-0.38px;padding-left:2.97px;">C150600014/02</div><div class="c" style="left:133px;width:90px;letter-spacing:-0.52px;padding-left:2.06px;">Menuiserie PVC</div><div class="c" style="left:224px;width:20px;"></div><div class="c" style="left:245px;width:91px;letter-spacing:0.15px;padding-left:9.43px;">05/06/2015</div><div class="c" style="left:337px;width:50px;letter-spacing:0.9px;padding-left:1.38px;">Un</div><div class="c" style="left:388px;width:100px;letter-spacing:-0.41px;text-align:right;padding-right:2.10px;">0,000</div><div class="c" style="left:489px;width:80px;letter-spacing:-0.41px;text-align:right;padding-right:1.85px;">10,000</div><div class="c" style="left:570px;width:81px;letter-spacing:-0.41px;text-align:right;padding-right:2.60px;">10,000</div><div class="c" style="left:652px;width:80px;letter-spacing:-0.41px;text-align:right;padding-right:2.35px;">0,000</div><div class="c" style="left:733px;width:90px;letter-spacing:0.15px;padding-left:8.93px;">05/06/2015</div><div class="c" style="left:824px;width:40px;padding-left:2.31px;">F</div><div class="c" style="left:865px;width:41px;letter-spacing:-1.5px;padding-left:2.52px;">CDE</div><div class="c" style="left:907px;width:90px;letter-spacing:-0.6px;padding-left:1.77px;">C150600014</div><div class="c" style="left:998px;width:50px;letter-spacing:-0.43px;padding-left:2.68px;">02</div><div class="c" style="left:1049px;width:70px;letter-spacing:-0.43px;padding-left:2.65px;">1560001</div></div>
<div class="rh" style="top:606px;"></div>
<div class="row alt" style="top:606px"><div class="c" style="left:0px;width:20px;padding-left:3.07px;">C</div><div class="c" style="left:21px;width:111px;letter-spacing:-0.38px;padding-left:2.97px;">C150600015/01</div><div class="c" style="left:133px;width:90px;letter-spacing:-0.52px;padding-left:2.06px;">Menuiserie PVC</div><div class="c" style="left:224px;width:20px;"></div><div class="c" style="left:245px;width:91px;letter-spacing:0.15px;padding-left:9.43px;">05/06/2015</div><div class="c" style="left:337px;width:50px;letter-spacing:0.9px;padding-left:1.38px;">Un</div><div class="c" style="left:388px;width:100px;letter-spacing:-0.41px;text-align:right;padding-right:2.10px;">0,000</div><div class="c" style="left:489px;width:80px;letter-spacing:-0.41px;text-align:right;padding-right:1.85px;">1,000</div><div class="c" style="left:570px;width:81px;letter-spacing:-0.41px;text-align:right;padding-right:2.60px;">1,000</div><div class="c" style="left:652px;width:80px;letter-spacing:-0.41px;text-align:right;padding-right:2.35px;">0,000</div><div class="c" style="left:733px;width:90px;letter-spacing:0.15px;padding-left:8.93px;">05/06/2015</div><div class="c" style="left:824px;width:40px;padding-left:2.31px;">F</div><div class="c" style="left:865px;width:41px;letter-spacing:-1.5px;padding-left:2.52px;">CDE</div><div class="c" style="left:907px;width:90px;letter-spacing:-0.6px;padding-left:1.77px;">C150600015</div><div class="c" style="left:998px;width:50px;letter-spacing:-0.43px;padding-left:2.68px;">01</div><div class="c" style="left:1049px;width:70px;letter-spacing:-0.43px;padding-left:2.65px;">1560003</div></div>
<div class="rh" style="top:626px;"></div>
<div class="row" style="top:626px"><div class="c" style="left:0px;width:20px;padding-left:3.07px;">C</div><div class="c" style="left:21px;width:111px;letter-spacing:-0.38px;padding-left:2.97px;">C150600017/01</div><div class="c" style="left:133px;width:90px;letter-spacing:-0.52px;padding-left:2.06px;">Menuiserie PVC</div><div class="c" style="left:224px;width:20px;"></div><div class="c" style="left:245px;width:91px;letter-spacing:0.15px;padding-left:9.43px;">05/06/2015</div><div class="c" style="left:337px;width:50px;letter-spacing:0.9px;padding-left:1.38px;">Un</div><div class="c" style="left:388px;width:100px;letter-spacing:-0.41px;text-align:right;padding-right:2.10px;">0,000</div><div class="c" style="left:489px;width:80px;letter-spacing:-0.41px;text-align:right;padding-right:1.85px;">1,000</div><div class="c" style="left:570px;width:81px;letter-spacing:-0.41px;text-align:right;padding-right:2.60px;">1,000</div><div class="c" style="left:652px;width:80px;letter-spacing:-0.41px;text-align:right;padding-right:2.35px;">0,000</div><div class="c" style="left:733px;width:90px;letter-spacing:0.15px;padding-left:8.93px;">05/06/2015</div><div class="c" style="left:824px;width:40px;padding-left:2.31px;">F</div><div class="c" style="left:865px;width:41px;letter-spacing:-1.5px;padding-left:2.52px;">CDE</div><div class="c" style="left:907px;width:90px;letter-spacing:-0.6px;padding-left:1.77px;">C150600017</div><div class="c" style="left:998px;width:50px;letter-spacing:-0.43px;padding-left:2.68px;">01</div><div class="c" style="left:1049px;width:70px;letter-spacing:-0.43px;padding-left:2.65px;">1560005</div></div>
<div class="vs" style="left:62px"></div>
<div class="vs" style="left:174px"></div>
<div class="vs" style="left:265px"></div>
<div class="vs" style="left:286px"></div>
<div class="vs" style="left:378px"></div>
<div class="vs" style="left:429px"></div>
<div class="vs" style="left:530px"></div>
<div class="vs" style="left:611px"></div>
<div class="vs" style="left:693px"></div>
<div class="vs" style="left:774px"></div>
<div class="vs" style="left:865px"></div>
<div class="vs" style="left:906px"></div>
<div class="vs" style="left:948px"></div>
<div class="vs" style="left:1039px"></div>
<div class="vs" style="left:1090px"></div>
<div class="vs" style="left:1161px"></div>
<div class="a" style="left:42px;top:26px;width:22px;height:21px;border:solid #000;border-width:1px 2px 2px 2px"></div>
</div>
<svg class="ic" style="left:1616.00px;top:725.00px;width:12.00px;height:19.00px" viewBox="0 0 12 19" preserveAspectRatio="none"><path d="M0.500 0.500v15l3.600-3.300 2.500 5.800 2.200-1-2.500-5.500h5z" fill="#fff" stroke="#000" stroke-width="1"/></svg>
</div></body></html>
